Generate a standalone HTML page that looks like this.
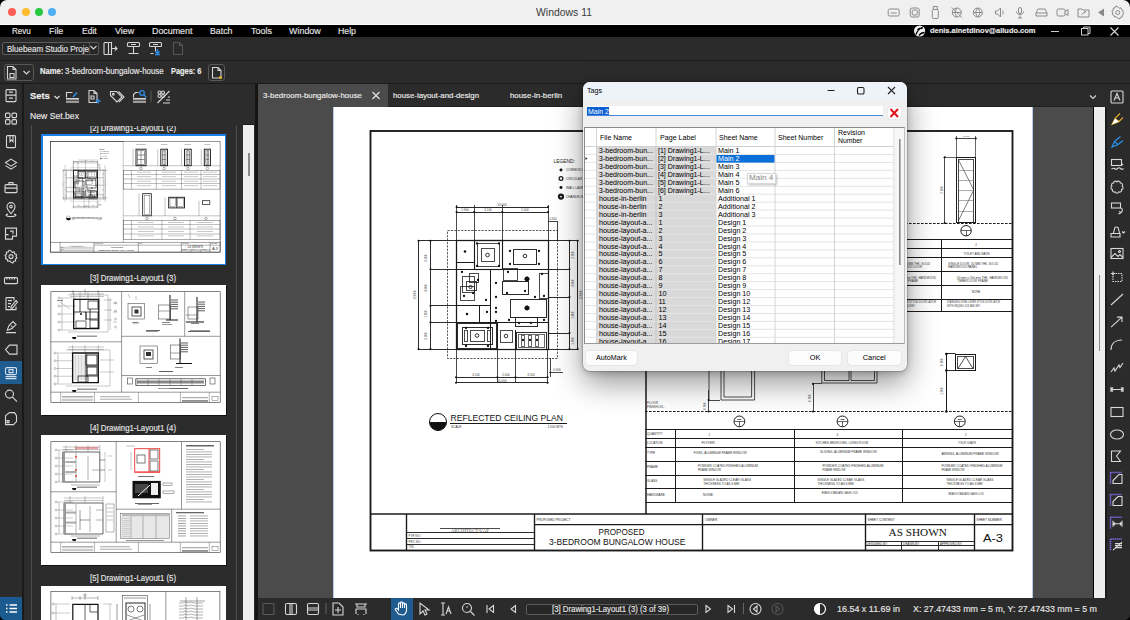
<!DOCTYPE html><html><head><meta charset="utf-8"><style>
*{margin:0;padding:0;box-sizing:border-box}
html,body{width:1130px;height:620px;overflow:hidden;background:#000;font-family:"Liberation Sans",sans-serif;-webkit-font-smoothing:antialiased}
.a{position:absolute}
.t{position:absolute;white-space:nowrap}
.w{-webkit-text-stroke:0.15px currentColor}
svg{position:absolute;overflow:visible}
</style></head><body><div class="a" style="left:0px;top:0px;width:1130px;height:25px;background:#f0f0f0;border-radius:7px 7px 0 0"></div>
<div class="a" style="left:0px;top:24px;width:1130px;height:1px;background:#fcfcfc;"></div>
<div class="a" style="left:8px;top:8.4px;width:8px;height:8px;border-radius:50%;background:#ff5f57"></div>
<div class="a" style="left:21.5px;top:8.4px;width:8px;height:8px;border-radius:50%;background:#febc2e"></div>
<div class="a" style="left:34.5px;top:8.4px;width:8px;height:8px;border-radius:50%;background:#28c840"></div>
<div class="a" style="left:47.7px;top:8.4px;width:8px;height:8px;border-radius:50%;background:#50b0f2"></div>
<div class="t" style="left:536.00px;top:7.09px;font-size:11px;line-height:11px;color:#3c3c3c;font-weight:normal;transform:scaleX(0.9476);transform-origin:0 0;">Windows 11</div>
<svg style="left:0px;top:0px;" width="1130" height="25" viewBox="0 0 1130 25"><g transform="translate(893.7,12.5)" fill="none" stroke="#8a8a8a" stroke-width="1"><rect x="-5.5" y="-3.5" width="11" height="7" rx="1.5"/><path d="M-3 0.5h6" /></g><g transform="translate(914.7,12.5)" fill="none" stroke="#8a8a8a" stroke-width="1"><rect x="-4.5" y="-4.5" width="9" height="9" rx="2"/><rect x="-2.5" y="-2.5" width="5" height="5" rx="1"/></g><g transform="translate(935.3,12.5)" fill="none" stroke="#8a8a8a" stroke-width="1"><rect x="-3" y="-3" width="6" height="9" rx="1"/><path d="M-2 -3v-3h4v3"/></g><g transform="translate(956.8,12.5)" fill="none" stroke="#8a8a8a" stroke-width="1"><circle r="4.5"/><path d="M-5 -5l10 10M-4.5 0h9M0 -4.5c-2 3-2 6 0 9"/></g><g transform="translate(977.8,12.5)" fill="none" stroke="#8a8a8a" stroke-width="1"><circle r="4.5"/><path d="M-4.5 0h9M0 -4.5c-2.5 3-2.5 6 0 9M0 -4.5c2.5 3 2.5 6 0 9"/></g><g transform="translate(999.5,12.5)" fill="none" stroke="#8a8a8a" stroke-width="1"><path d="M-4 -1.5h2l3-3v9l-3-3h-2z M3 -2c1 1 1 3 0 4"/></g><g transform="translate(1020,12.5)" fill="none" stroke="#8a8a8a" stroke-width="1"><rect x="-1.5" y="-5" width="3" height="6" rx="1.5"/><path d="M-3.5 -1c0 4 7 4 7 0M0 3v2.5M-2 5.5h4"/></g><g transform="translate(1041.5,12.5)" fill="none" stroke="#8a8a8a" stroke-width="1"><path d="M-5.5 3.5h11v-3l-2-4h-7l-2 4z M-5.5 0.5h11"/></g><g transform="translate(1062.5,12.5)" fill="none" stroke="#8a8a8a" stroke-width="1"><rect x="-5.5" y="-3.5" width="8" height="7" rx="1.5"/><path d="M2.5 -1l3-2v6l-3-2"/></g><g transform="translate(1083.5,12.5)" fill="none" stroke="#8a8a8a" stroke-width="1"><path d="M-5.5 4.5v-8h4l1 1h6v7z M-2 2l4-3M1 -1h1v1"/></g><path d="M1104,8.5 l-6,4 l6,4z" fill="#8a8a8a"/><g transform="translate(1117.8,12.5)" fill="none" stroke="#8a8a8a" stroke-width="1"><circle r="2"/><path d="M0 -5.5l1.3 1.3 1.9-.5.5 1.9 1.8.8-.5 1.9 1 1.6-1.6 1 .2 1.9-1.9.3-.8 1.8-1.8-.7L0 5.5l-1.3-1.3-1.9.5-.5-1.9-1.8-.8.5-1.9-1-1.6 1.6-1-.2-1.9 1.9-.3.8-1.8 1.8.7z"/></g></svg>
<div class="a" style="left:0px;top:25px;width:1130px;height:12px;background:#000;"></div>
<div class="t w" style="left:11.50px;top:26.81px;font-size:9.2px;line-height:9.2px;color:#e4e4e4;font-weight:normal;transform:scaleX(0.8754);transform-origin:0 0;">Revu</div>
<div class="t w" style="left:48.60px;top:26.81px;font-size:9.2px;line-height:9.2px;color:#e4e4e4;font-weight:normal;transform:scaleX(0.9647);transform-origin:0 0;">File</div>
<div class="t w" style="left:82.00px;top:26.81px;font-size:9.2px;line-height:9.2px;color:#e4e4e4;font-weight:normal;transform:scaleX(0.9273);transform-origin:0 0;">Edit</div>
<div class="t w" style="left:115.40px;top:26.81px;font-size:9.2px;line-height:9.2px;color:#e4e4e4;font-weight:normal;transform:scaleX(0.9710);transform-origin:0 0;">View</div>
<div class="t w" style="left:151.80px;top:26.81px;font-size:9.2px;line-height:9.2px;color:#e4e4e4;font-weight:normal;transform:scaleX(0.9660);transform-origin:0 0;">Document</div>
<div class="t w" style="left:209.60px;top:26.81px;font-size:9.2px;line-height:9.2px;color:#e4e4e4;font-weight:normal;transform:scaleX(0.9522);transform-origin:0 0;">Batch</div>
<div class="t w" style="left:250.70px;top:26.81px;font-size:9.2px;line-height:9.2px;color:#e4e4e4;font-weight:normal;transform:scaleX(0.9732);transform-origin:0 0;">Tools</div>
<div class="t w" style="left:289.00px;top:26.81px;font-size:9.2px;line-height:9.2px;color:#e4e4e4;font-weight:normal;transform:scaleX(0.9719);transform-origin:0 0;">Window</div>
<div class="t w" style="left:338.30px;top:26.81px;font-size:9.2px;line-height:9.2px;color:#e4e4e4;font-weight:normal;transform:scaleX(0.9514);transform-origin:0 0;">Help</div>
<div class="t w" style="left:930.00px;top:27.20px;font-size:7.8px;line-height:7.8px;color:#e8e8e8;font-weight:bold;transform:scaleX(0.9555);transform-origin:0 0;">denis.ainetdinov@alludo.com</div>
<svg style="left:0px;top:25px;" width="1130" height="12" viewBox="0 0 1130 12"><circle cx="919.6" cy="6" r="5.6" fill="#f0f0f0"/><path d="M916 9.5c1-3 3-6 7-7.5M917.5 5c1-1.5 3-2 5-1.5M919 10.5c1.5-2 3.5-3 5.5-3" stroke="#000" stroke-width="1.3" fill="none"/><path d="M1051 6.5h8" stroke="#cfcfcf" stroke-width="1"/><rect x="1081.5" y="3.5" width="6.5" height="6.5" fill="none" stroke="#cfcfcf"/><path d="M1083.5 3.5v-1.5h6.5v6.5h-2" fill="none" stroke="#cfcfcf"/><path d="M1110.5 2.5l8 8M1118.5 2.5l-8 8" stroke="#d8d8d8" stroke-width="1.1"/></svg>
<div class="a" style="left:0px;top:37px;width:1130px;height:23px;background:#2b2b2b;"></div>
<div class="a" style="left:0px;top:59.5px;width:1130px;height:1.5px;background:#1b1b1b;"></div>
<div class="a" style="left:0px;top:61px;width:1130px;height:22px;background:#2b2b2b;"></div>
<div class="a" style="left:0px;top:83px;width:1130px;height:1px;background:#1b1b1b;"></div>
<div class="a" style="left:2px;top:42px;width:97px;height:13px;border:1px solid #5c5c5c;border-radius:2px;background:#262626"></div>
<div class="a" style="left:89px;top:43px;width:1px;height:11px;background:#4a4a4a;"></div>
<div class="a" style="left:3px;top:43px;width:85.5px;height:11px;overflow:hidden">
<div class="t w" style="left:3.50px;top:1.72px;font-size:8.6px;line-height:8.6px;color:#e2e2e2;font-weight:normal;transform:scaleX(0.9322);transform-origin:0 0;">Bluebeam Studio Proje</div>
</div>
<svg style="left:0px;top:0px;" width="1130" height="60" viewBox="0 0 1130 60"><g fill="none" stroke="#d6d6d6" stroke-width="1.1"><path d="M90.5 46l3 3 3-3"/></g><g fill="none" stroke="#d6d6d6" stroke-width="1.1"><rect x="104" y="42.5" width="4.5" height="12" rx="1"/><path d="M108.5 42.5h3v12h-3M111.5 48.5h5.5M115 46.5l2 2-2 2"/></g><g fill="none" stroke="#d6d6d6" stroke-width="1.1"><rect x="127.5" y="42.5" width="12" height="4" rx="1"/><path d="M133.5 46.5v7M128.5 53.5h10M131 44.5h5"/></g><g fill="none" stroke="#d6d6d6" stroke-width="1.1"><rect x="149.5" y="42.5" width="12" height="4" rx="1"/><path d="M155.5 46.5v5M150.5 53.5h3M153 44.5h5"/></g><g fill="none" stroke="#2b8ce6" stroke-width="1.3"><path d="M157.5 49v4.5M155.5 51.5l2 2 2-2M155 54.5h5"/></g><g fill="none" stroke="#555555" stroke-width="1.1"><path d="M173.5 42.5h6l3 3v9h-9z M179.5 42.5v3h3"/></g></svg>
<div class="a" style="left:4px;top:64px;width:30px;height:17px;border:1px solid #585858;border-radius:3px"></div>
<div class="a" style="left:208px;top:64px;width:17px;height:16.5px;border:1px solid #585858;border-radius:3px"></div>
<svg style="left:0px;top:0px;" width="1130" height="84" viewBox="0 0 1130 84"><g fill="none" stroke="#d6d6d6" stroke-width="1.1"><path d="M7.5 66.5h5.5l3 3v9.5h-8.5z M13 66.5v3h3M10 73.5h4v4h-4z"/></g><g fill="none" stroke="#d6d6d6" stroke-width="1.1"><path d="M23.5 71l3 3 3-3"/></g><g fill="none" stroke="#d6d6d6" stroke-width="1.1"><path d="M212.5 67.5h5.5l3 3v7.5h-8.5z M218 67.5v3h3"/></g><circle cx="220.5" cy="77.5" r="1.5" fill="#e5b52b"/></svg>
<div class="t w" style="left:39.90px;top:68.16px;font-size:8.2px;line-height:8.2px;color:#ececec;font-weight:bold;transform:scaleX(0.9336);transform-origin:0 0;">Name:</div>
<div class="t w" style="left:65.00px;top:68.16px;font-size:8.2px;line-height:8.2px;color:#e6e6e6;font-weight:normal;transform:scaleX(0.9634);transform-origin:0 0;">3-bedroom-bungalow-house</div>
<div class="t w" style="left:170.90px;top:68.16px;font-size:8.2px;line-height:8.2px;color:#ececec;font-weight:bold;transform:scaleX(0.9043);transform-origin:0 0;">Pages: 6</div>
<div class="a" style="left:0px;top:84px;width:22px;height:536px;background:#2b2b2b;"></div>
<div class="a" style="left:22px;top:84px;width:2px;height:536px;background:#1a1a1a;"></div>
<div class="a" style="left:0px;top:361px;width:22px;height:23px;background:#1e5b8f;"></div>
<div class="a" style="left:0px;top:597px;width:22px;height:23px;background:#1a5a8f;"></div>
<svg style="left:0px;top:0px;" width="30" height="620" viewBox="0 0 30 620"><g transform="translate(11,95.6)" fill="none" stroke="#d8d8d8" stroke-width="1.1"><rect x="-5" y="-6" width="10" height="12" rx="1"/><path d="M-5 -0.5h10M-2 -3.5h4M-2 2.5h4"/></g><g transform="translate(11,118.6)" fill="none" stroke="#d8d8d8" stroke-width="1.1"><rect x="-5.5" y="-5.5" width="4.5" height="4.5" rx="1"/><rect x="1" y="-5.5" width="4.5" height="4.5" rx="1"/><rect x="-5.5" y="1" width="4.5" height="4.5" rx="1"/><rect x="1" y="1" width="4.5" height="4.5" rx="1"/></g><g transform="translate(11,141.6)" fill="none" stroke="#d8d8d8" stroke-width="1.1"><rect x="-4.5" y="-6" width="9" height="12" rx="1"/><path d="M-1 -6v6l1.5-1.5 1.5 1.5v-6"/></g><g transform="translate(11,164.6)" fill="none" stroke="#d8d8d8" stroke-width="1.1"><path d="M0 -5.5l5.5 3.5-5.5 3.5-5.5-3.5z M-5.5 1l5.5 3.5 5.5-3.5"/></g><g transform="translate(11,187.6)" fill="none" stroke="#d8d8d8" stroke-width="1.1"><rect x="-6" y="-3" width="12" height="8" rx="1"/><path d="M-2 -3v-2h4v2M-6 0.5h12"/></g><g transform="translate(11,210.6)" fill="none" stroke="#d8d8d8" stroke-width="1.1"><path d="M0 3c-3-3-4-5-4-7a4 4 0 0 1 8 0c0 2-1 4-4 7z"/><circle cy="-4" r="1.3"/><path d="M-3 3.5c-3 .5-3 2.5 3 2.5s6-2 3-2.5"/></g><g transform="translate(11,233.6)" fill="none" stroke="#d8d8d8" stroke-width="1.1"><path d="M-5.5 -5.5h11v8h-4v3h-7z M-1 -2.5h3v3M-5.5 1h3"/></g><g transform="translate(11,256.6)" fill="none" stroke="#d8d8d8" stroke-width="1.1"><circle r="2"/><path d="M0 -5.5l1.3 1.3 1.9-.5.5 1.9 1.8.8-.5 1.9 1 1.6-1.6 1 .2 1.9-1.9.3-.8 1.8-1.8-.7L0 5.5l-1.3-1.3-1.9.5-.5-1.9-1.8-.8.5-1.9-1-1.6 1.6-1-.2-1.9 1.9-.3.8-1.8 1.8.7z"/></g><g transform="translate(11,280.6)" fill="none" stroke="#d8d8d8" stroke-width="1.1"><rect x="-6.5" y="-3" width="13" height="6" rx="1"/><path d="M-4 -3v2M-1.5 -3v2M1 -3v2M3.5 -3v2"/></g><g transform="translate(11,303.6)" fill="none" stroke="#d8d8d8" stroke-width="1.1"><path d="M-5 -6h8v3M-5 -6v12h10v-3M-3 -3h4M-3 0h3M-3 3h2M0 3l5-6 1.5 1.5-5 6h-1.5z"/></g><g transform="translate(11,326.6)" fill="none" stroke="#d8d8d8" stroke-width="1.1"><path d="M-5 6h10M-4 4l2-5 4-4 3 3-4 4-5 2M0 -1l1.5 1.5"/></g><g transform="translate(11,349.6)" fill="none" stroke="#d8d8d8" stroke-width="1.1"><path d="M-5.5 0l4-4.5h7.5v9h-7.5z"/></g><g transform="translate(11,372.6)" fill="none" stroke="#cfe0f0" stroke-width="1.1"><rect x="-5.5" y="-5" width="11" height="7" rx="1.5"/><path d="M-5.5 4h11M-5.5 6h11M-2 -3h4v3h-4z"/></g><g transform="translate(11,395.6)" fill="none" stroke="#d8d8d8" stroke-width="1.1"><circle cx="-1.5" cy="-1.5" r="4"/><path d="M1.5 1.5l4.5 4.5"/></g><g transform="translate(11,418.6)" fill="none" stroke="#d8d8d8" stroke-width="1.1"><path d="M-5.5 -3l4-3h5l2 3v6l-3 3h-8z M-4 4v-2h2v2z"/></g><g transform="translate(11,608.5)" fill="none" stroke="#ffffff" stroke-width="1.1"><path d="M-1.5 -3.5h7.5M-1.5 0h7.5M-1.5 3.5h7.5" stroke-width="1.7"/><path d="M-5 -3.5h1.5M-5 0h1.5M-5 3.5h1.5" stroke-width="1.7"/></g></svg>
<div class="a" style="left:24px;top:84px;width:232px;height:536px;background:#2c2c2c;"></div>
<div class="a" style="left:255px;top:84px;width:2.5px;height:536px;background:#141414;"></div>
<div class="t w" style="left:30.00px;top:90.69px;font-size:9.7px;line-height:9.7px;color:#f0f0f0;font-weight:bold;transform:scaleX(0.9664);transform-origin:0 0;">Sets</div>
<svg style="left:0px;top:0px;" width="260" height="110" viewBox="0 0 260 110"><g fill="none" stroke="#e0e0e0" stroke-width="1.2"><path d="M54.5 96l2.5 2.5 2.5-2.5"/></g><g fill="none" stroke="#d6d6d6" stroke-width="1.1"><path d="M66.5 97.5v-5h6"/></g><rect x="66" y="98" width="13" height="1.6" fill="#d6d6d6"/><rect x="66" y="100.6" width="13" height="2.4" fill="#9a9a9a"/><g fill="none" stroke="#2b8ce6" stroke-width="1.6"><path d="M73 97l4-4.5" /></g><g fill="none" stroke="#d6d6d6" stroke-width="1.1"><path d="M89 90.5h5l3 3v9h-8z M94 90.5v3h3M91 96h3v3h-3z"/></g><g fill="none" stroke="#2b8ce6" stroke-width="1.3"><path d="M98 98.5v5M95.5 101h5"/></g><g fill="none" stroke="#d6d6d6" stroke-width="1.1"><path d="M110.5 91.5h6l5.5 5.5-5 5-6.5-6.5z"/><circle cx="113.3" cy="94.3" r="0.9"/><path d="M118.5 91.5l5.5 5.5-5 5"/></g><g fill="none" stroke="#d6d6d6" stroke-width="1.1"><path d="M133.5 97.5v-3l2-2h3"/></g><rect x="133" y="98" width="13" height="1.6" fill="#d6d6d6"/><rect x="133" y="100.6" width="13" height="2.4" fill="#9a9a9a"/><g fill="none" stroke="#2b8ce6" stroke-width="1.3"><circle cx="142" cy="93" r="2.3"/><path d="M143.8 94.8l2.5 2.5"/></g><rect x="150.5" y="91" width="1" height="11" fill="#5a5a5a"/><g fill="none" stroke="#d6d6d6" stroke-width="1.1"><circle cx="159.5" cy="92.5" r="1.5"/><circle cx="163" cy="92.5" r="1.5"/><circle cx="159.5" cy="96" r="1.5"/><circle cx="163" cy="96" r="1.5"/><path d="M157.5 103l12-12M163 103h7M166 100h4M168 97h2"/></g></svg>
<div class="t w" style="left:30.00px;top:111.95px;font-size:8.8px;line-height:8.8px;color:#e6e6e6;font-weight:normal;transform:scaleX(0.9822);transform-origin:0 0;">New Set.bex</div>
<div class="a" style="left:30.5px;top:125px;width:1px;height:495px;background:#4e4e4e;"></div>
<div class="a" style="left:243px;top:125px;width:11px;height:495px;background:#eeeeee;"></div>
<div class="a" style="left:248px;top:153px;width:1.5px;height:23px;background:#8a8a8a;"></div>
<div class="a" style="left:235.5px;top:125.5px;width:1px;height:495px;background:#505050;"></div>
<div class="a" style="left:243px;top:124px;width:11px;height:1px;background:#1a1a1a;"></div>
<div class="a" style="left:257.5px;top:84px;width:872.5px;height:23px;background:#2b2b2b;"></div>
<div class="a" style="left:257.5px;top:84px;width:130px;height:23px;background:#4b4b4b;"></div>
<div class="a" style="left:387.5px;top:106px;width:715px;height:1px;background:#1f1f1f;"></div>
<div class="t w" style="left:263.00px;top:91.63px;font-size:8px;line-height:8px;color:#ececec;font-weight:normal;transform:scaleX(0.9895);transform-origin:0 0;">3-bedroom-bungalow-house</div>
<div class="t w" style="left:393.00px;top:91.63px;font-size:8px;line-height:8px;color:#ececec;font-weight:normal;transform:scaleX(0.9767);transform-origin:0 0;">house-layout-and-design</div>
<div class="t w" style="left:510.00px;top:91.63px;font-size:8px;line-height:8px;color:#ececec;font-weight:normal;transform:scaleX(0.9827);transform-origin:0 0;">house-in-berlin</div>
<svg style="left:0px;top:0px;" width="1130" height="110" viewBox="0 0 1130 110"><path d="M372.5 92l7 7M379.5 92l-7 7" stroke="#e8e8e8" stroke-width="1.1"/><path d="M1090 95.5l3 3 3-3" stroke="#d8d8d8" stroke-width="1.1" fill="none"/></svg>
<div class="a" style="left:257.5px;top:107px;width:835.5px;height:491px;background:#4b4b4b;"></div>
<div class="a" style="left:333px;top:107px;width:700px;height:491px;background:#ffffff;"></div>
<div class="a" style="left:332.5px;top:107px;width:1px;height:491px;background:#b8cce8;"></div>
<div class="a" style="left:1032px;top:107px;width:1px;height:491px;background:#b8cce8;"></div>
<div class="a" style="left:1093.5px;top:107px;width:11.5px;height:491px;background:#eeeeee;"></div>
<div class="a" style="left:1098.6px;top:275.4px;width:1.5px;height:76px;background:#8a8a8a;"></div>
<div class="a" style="left:1105px;top:107px;width:1.5px;height:491px;background:#1b1b1b;"></div>
<div class="a" style="left:257.5px;top:107px;width:835.5px;height:491px;overflow:hidden">
<svg style="left:-257.5px;top:-107px" width="1130" height="620" viewBox="0 0 1130 620"><g id="sheet"><rect x="370.5" y="131" width="642" height="419.5" fill="none" stroke="#1a1a1a" stroke-width="1.88"/><path d="M646 131L646 514" stroke="#1a1a1a" stroke-width="1.50"/><path d="M370.5 514L1012.5 514" stroke="#1a1a1a" stroke-width="1.62"/><path d="M406.5 514L406.5 550.5" stroke="#1a1a1a" stroke-width="1.38"/><path d="M534.5 514L534.5 550.5" stroke="#1a1a1a" stroke-width="1.38"/><path d="M702.5 514L702.5 550.5" stroke="#1a1a1a" stroke-width="1.38"/><path d="M865.5 514L865.5 550.5" stroke="#1a1a1a" stroke-width="1.38"/><path d="M974.5 514L974.5 550.5" stroke="#1a1a1a" stroke-width="1.38"/><path d="M534 524.5L1012.5 524.5" stroke="#1a1a1a" stroke-width="1.25"/><path d="M406.5 532.5L534 532.5" stroke="#1a1a1a" stroke-width="1.00" stroke-opacity="0.92"/><path d="M406.5 538.5L534 538.5" stroke="#1a1a1a" stroke-width="1.00" stroke-opacity="0.92"/><path d="M406.5 544.5L534 544.5" stroke="#1a1a1a" stroke-width="1.00" stroke-opacity="0.92"/><path d="M440 528.5L500 528.5" stroke="#1a1a1a" stroke-width="1.00" stroke-opacity="0.79"/><text x="470" y="532" font-size="3.6" font-family="Liberation Serif" fill="#555" text-anchor="middle" font-weight="normal" textLength="38" lengthAdjust="spacingAndGlyphs">ARCHITECT-UAP</text><text x="408.5" y="537" font-size="3.0" font-family="Liberation Sans" fill="#444" text-anchor="start" font-weight="normal">PTR NO.:</text><text x="408.5" y="542.5" font-size="3.0" font-family="Liberation Sans" fill="#444" text-anchor="start" font-weight="normal">PRC NO.:</text><text x="408.5" y="548" font-size="3.0" font-family="Liberation Sans" fill="#444" text-anchor="start" font-weight="normal">TIN:</text><text x="536.5" y="521" font-size="3.2" font-family="Liberation Sans" fill="#222" text-anchor="start" font-weight="normal">PROPOSED PROJECT</text><text x="598.5" y="534.5" font-size="8.6" font-family="Liberation Sans" fill="#111" text-anchor="start" font-weight="normal" textLength="46" lengthAdjust="spacingAndGlyphs">PROPOSED</text><text x="549" y="545" font-size="8.6" font-family="Liberation Sans" fill="#111" text-anchor="start" font-weight="normal" textLength="136.5" lengthAdjust="spacingAndGlyphs">3-BEDROOM BUNGALOW HOUSE</text><text x="705" y="521" font-size="3.2" font-family="Liberation Sans" fill="#222" text-anchor="start" font-weight="normal">OWNER</text><text x="867.5" y="521" font-size="3.2" font-family="Liberation Sans" fill="#222" text-anchor="start" font-weight="normal">SHEET CONTENT:</text><text x="976.5" y="521" font-size="3.2" font-family="Liberation Sans" fill="#222" text-anchor="start" font-weight="normal">SHEET NUMBER</text><text x="888.5" y="536" font-size="11.2" font-family="Liberation Serif" fill="#111" text-anchor="start" font-weight="normal" textLength="58.5" lengthAdjust="spacingAndGlyphs">AS SHOWN</text><text x="983" y="542" font-size="10.5" font-family="Liberation Sans" fill="#111" text-anchor="start" font-weight="normal" textLength="20" lengthAdjust="spacingAndGlyphs">A-3</text><path d="M865.5 541.5L974.5 541.5" stroke="#1a1a1a" stroke-width="1.00" stroke-opacity="0.92"/><path d="M865.5 545.5L974.5 545.5" stroke="#1a1a1a" stroke-width="1.00" stroke-opacity="0.92"/><path d="M901.5 541.5L901.5 550.5" stroke="#1a1a1a" stroke-width="1.00" stroke-opacity="0.92"/><path d="M938.5 541.5L938.5 550.5" stroke="#1a1a1a" stroke-width="1.00" stroke-opacity="0.92"/><text x="866.5" y="544.5" font-size="3.0" font-family="Liberation Sans" fill="#333" text-anchor="start" font-weight="normal">DESIGNED BY:</text><text x="903" y="544.5" font-size="3.0" font-family="Liberation Sans" fill="#333" text-anchor="start" font-weight="normal">DRAWN BY:</text><text x="940" y="544.5" font-size="3.0" font-family="Liberation Sans" fill="#333" text-anchor="start" font-weight="normal">APPROVED BY:</text><text x="553.5" y="163.3" font-size="5.0" font-family="Liberation Sans" fill="#222" text-anchor="start" font-weight="normal" textLength="21.5" lengthAdjust="spacingAndGlyphs">LEGEND:</text><circle cx="561" cy="170" r="1.49" fill="#111"/><text x="566" y="171.3" font-size="3.2" font-family="Liberation Sans" fill="#333" text-anchor="start" font-weight="normal">COMMON LIGHT</text><circle cx="561" cy="178.5" r="1.9" fill="none" stroke="#1a1a1a" stroke-width="1.25"/><text x="566" y="179.8" font-size="3.2" font-family="Liberation Sans" fill="#333" text-anchor="start" font-weight="normal">CIRCULAR LIGHT</text><circle cx="561" cy="187.5" r="1.49" fill="#111"/><text x="566" y="188.8" font-size="3.2" font-family="Liberation Sans" fill="#333" text-anchor="start" font-weight="normal">WALL LAMP</text><circle cx="561" cy="196.5" r="2.0" fill="#fff" stroke="#1a1a1a" stroke-width="2.25"/><text x="566" y="197.8" font-size="3.2" font-family="Liberation Sans" fill="#333" text-anchor="start" font-weight="normal">CHANDELIER</text><path d="M456.6 207.5L548 207.5" stroke="#1a1a1a" stroke-width="1.00" stroke-opacity="0.92"/><text x="502" y="205.6" font-size="3.2" font-family="Liberation Sans" fill="#444" text-anchor="middle" font-weight="normal">10.000</text><path d="M456.6 212.5L548 212.5" stroke="#1a1a1a" stroke-width="1.00" stroke-opacity="0.92"/><text x="465" y="210.8" font-size="3.0" font-family="Liberation Sans" fill="#444" text-anchor="middle" font-weight="normal">1.900</text><text x="488" y="210.8" font-size="3.0" font-family="Liberation Sans" fill="#444" text-anchor="middle" font-weight="normal">3.100</text><text x="525" y="210.8" font-size="3.0" font-family="Liberation Sans" fill="#444" text-anchor="middle" font-weight="normal">5.000</text><path d="M456.5 205L456.5 240.7" stroke="#1a1a1a" stroke-width="1.00" stroke-opacity="0.79"/><circle cx="456.6" cy="212" r="1.03" fill="#111"/><path d="M474.5 205L474.5 240.7" stroke="#1a1a1a" stroke-width="1.00" stroke-opacity="0.79"/><circle cx="474" cy="212" r="1.03" fill="#111"/><path d="M502.5 205L502.5 240.7" stroke="#1a1a1a" stroke-width="1.00" stroke-opacity="0.79"/><circle cx="502.3" cy="212" r="1.03" fill="#111"/><path d="M548.5 205L548.5 240.7" stroke="#1a1a1a" stroke-width="1.00" stroke-opacity="0.79"/><circle cx="548" cy="212" r="1.03" fill="#111"/><circle cx="456.6" cy="207" r="1.03" fill="#111"/><circle cx="548" cy="207" r="1.03" fill="#111"/><path d="M548 221.5L557.3 221.5" stroke="#1a1a1a" stroke-width="1.00" stroke-opacity="0.79"/><path d="M557.5 221L557.5 240" stroke="#1a1a1a" stroke-width="1.00" stroke-opacity="0.79"/><text x="553" y="219.6" font-size="2.8" font-family="Liberation Sans" fill="#444" text-anchor="middle" font-weight="normal">0.300</text><rect x="447.5" y="230.5" width="110.0" height="128.0" fill="none" stroke="#1a1a1a" stroke-width="1.00" stroke-dasharray="2.2 1.2" stroke-opacity="0.72"/><rect x="456.5" y="240.5" width="92.0" height="109.0" fill="none" stroke="#1a1a1a" stroke-width="1.25"/><path d="M418.5 240.5L577.7 240.5" stroke="#1a1a1a" stroke-width="1.00" stroke-opacity="0.92"/><path d="M418.5 349.5L577.7 349.5" stroke="#1a1a1a" stroke-width="1.00" stroke-opacity="0.92"/><path d="M430.5 269.5L456.6 269.5" stroke="#1a1a1a" stroke-width="1.00" stroke-opacity="0.92"/><path d="M430.5 305.5L456.6 305.5" stroke="#1a1a1a" stroke-width="1.00" stroke-opacity="0.92"/><path d="M430.5 322.5L456.6 322.5" stroke="#1a1a1a" stroke-width="1.00" stroke-opacity="0.92"/><path d="M548 297.5L569.5 297.5" stroke="#1a1a1a" stroke-width="1.00" stroke-opacity="0.92"/><path d="M548 333.5L569.5 333.5" stroke="#1a1a1a" stroke-width="1.00" stroke-opacity="0.92"/><path d="M418.5 240.7L418.5 349.1" stroke="#1a1a1a" stroke-width="1.00" stroke-opacity="0.92"/><circle cx="418.5" cy="240.7" r="1.03" fill="#111"/><circle cx="418.5" cy="349.1" r="1.03" fill="#111"/><path d="M430.5 240.7L430.5 349.1" stroke="#1a1a1a" stroke-width="1.00" stroke-opacity="0.92"/><circle cx="430.5" cy="240.7" r="1.03" fill="#111"/><circle cx="430.5" cy="349.1" r="1.03" fill="#111"/><circle cx="430.5" cy="269.2" r="1.03" fill="#111"/><circle cx="430.5" cy="305.8" r="1.03" fill="#111"/><circle cx="430.5" cy="322.4" r="1.03" fill="#111"/><path d="M569.5 240.7L569.5 349.1" stroke="#1a1a1a" stroke-width="1.00" stroke-opacity="0.92"/><circle cx="569.5" cy="240.7" r="1.03" fill="#111"/><circle cx="569.5" cy="349.1" r="1.03" fill="#111"/><path d="M577.5 240.7L577.5 349.1" stroke="#1a1a1a" stroke-width="1.00" stroke-opacity="0.92"/><circle cx="577.7" cy="240.7" r="1.03" fill="#111"/><circle cx="577.7" cy="349.1" r="1.03" fill="#111"/><circle cx="569.5" cy="269.2" r="1.03" fill="#111"/><circle cx="569.5" cy="297" r="1.03" fill="#111"/><circle cx="569.5" cy="333" r="1.03" fill="#111"/><path d="M548 269.5L569.5 269.5" stroke="#1a1a1a" stroke-width="1.00" stroke-opacity="0.92"/><path d="M456.5 349.1L456.5 383" stroke="#1a1a1a" stroke-width="1.00" stroke-opacity="0.79"/><circle cx="456" cy="377.2" r="1.03" fill="#111"/><path d="M497.5 349.1L497.5 383" stroke="#1a1a1a" stroke-width="1.00" stroke-opacity="0.79"/><circle cx="497.4" cy="377.2" r="1.03" fill="#111"/><path d="M515.5 349.1L515.5 383" stroke="#1a1a1a" stroke-width="1.00" stroke-opacity="0.79"/><circle cx="515.5" cy="377.2" r="1.03" fill="#111"/><path d="M547.5 349.1L547.5 383" stroke="#1a1a1a" stroke-width="1.00" stroke-opacity="0.79"/><circle cx="547.6" cy="377.2" r="1.03" fill="#111"/><path d="M456 377.5L547.6 377.5" stroke="#1a1a1a" stroke-width="1.00" stroke-opacity="0.92"/><path d="M456 382.5L547.6 382.5" stroke="#1a1a1a" stroke-width="1.00" stroke-opacity="0.92"/><circle cx="456" cy="382.8" r="1.03" fill="#111"/><circle cx="547.6" cy="382.8" r="1.03" fill="#111"/><text x="476" y="375.8" font-size="3.0" font-family="Liberation Sans" fill="#444" text-anchor="middle" font-weight="normal">4.500</text><text x="506" y="375.8" font-size="3.0" font-family="Liberation Sans" fill="#444" text-anchor="middle" font-weight="normal">2.000</text><text x="531" y="375.8" font-size="3.0" font-family="Liberation Sans" fill="#444" text-anchor="middle" font-weight="normal">3.500</text><text x="502" y="381.6" font-size="3.0" font-family="Liberation Sans" fill="#444" text-anchor="middle" font-weight="normal">10.000</text><path d="M549 372.5L563 372.5" stroke="#1a1a1a" stroke-width="1.00" stroke-opacity="0.79"/><path d="M550.5 358L550.5 377" stroke="#1a1a1a" stroke-width="1.00" stroke-opacity="0.79"/><text x="557" y="371" font-size="3.0" font-family="Liberation Sans" fill="#444" text-anchor="middle" font-weight="normal">0.300</text><text x="427" y="258" font-size="3.0" font-family="Liberation Sans" fill="#444" text-anchor="middle" transform="rotate(-90 427 258)">3.500</text><text x="427" y="288" font-size="3.0" font-family="Liberation Sans" fill="#444" text-anchor="middle" transform="rotate(-90 427 288)">4.000</text><text x="427" y="314" font-size="3.0" font-family="Liberation Sans" fill="#444" text-anchor="middle" transform="rotate(-90 427 314)">1.600</text><text x="427" y="336" font-size="3.0" font-family="Liberation Sans" fill="#444" text-anchor="middle" transform="rotate(-90 427 336)">3.200</text><text x="416" y="295" font-size="3.0" font-family="Liberation Sans" fill="#444" text-anchor="middle" transform="rotate(-90 416 295)">12.000</text><text x="574" y="255" font-size="3.0" font-family="Liberation Sans" fill="#444" text-anchor="middle" transform="rotate(-90 574 255)">3.200</text><text x="574" y="283" font-size="3.0" font-family="Liberation Sans" fill="#444" text-anchor="middle" transform="rotate(-90 574 283)">3.000</text><text x="574" y="315" font-size="3.0" font-family="Liberation Sans" fill="#444" text-anchor="middle" transform="rotate(-90 574 315)">1.800</text><text x="574" y="341" font-size="3.0" font-family="Liberation Sans" fill="#444" text-anchor="middle" transform="rotate(-90 574 341)">1.600</text><text x="582" y="295" font-size="3.0" font-family="Liberation Sans" fill="#444" text-anchor="middle" transform="rotate(-90 582 295)">12.000</text><rect x="456.5" y="240.5" width="18.0" height="22.0" fill="none" stroke="#1a1a1a" stroke-width="1.00"/><circle cx="465" cy="251.5" r="1.26" fill="#111"/><rect x="474.5" y="240.5" width="28.0" height="29.0" fill="none" stroke="#1a1a1a" stroke-width="1.12"/><rect x="477.5" y="243.5" width="22.0" height="23.0" fill="none" stroke="#1a1a1a" stroke-width="1.00" stroke-opacity="0.79"/><rect x="481.5" y="248.5" width="13.0" height="13.0" fill="none" stroke="#1a1a1a" stroke-width="1.00" stroke-opacity="0.79"/><circle cx="487.5" cy="255" r="1.8" fill="none" stroke="#1a1a1a" stroke-width="0.88"/><circle cx="477" cy="243.5" r="1.15" fill="#111"/><circle cx="499" cy="243.5" r="1.15" fill="#111"/><circle cx="477" cy="266" r="1.15" fill="#111"/><circle cx="499" cy="266" r="1.15" fill="#111"/><rect x="502.5" y="240.5" width="46.0" height="29.0" fill="none" stroke="#1a1a1a" stroke-width="1.00"/><rect x="513.5" y="249.5" width="23.0" height="15.0" fill="none" stroke="#1a1a1a" stroke-width="1.00" stroke-opacity="0.92"/><circle cx="525" cy="256" r="1.8" fill="none" stroke="#1a1a1a" stroke-width="0.88"/><circle cx="510" cy="251" r="1.15" fill="#111"/><circle cx="539" cy="251" r="1.15" fill="#111"/><circle cx="510" cy="264" r="1.15" fill="#111"/><circle cx="539" cy="264" r="1.15" fill="#111"/><path d="M456.6 262.5L474 262.5" stroke="#1a1a1a" stroke-width="1.00"/><path d="M456.6 269.5L548 269.5" stroke="#1a1a1a" stroke-width="1.12"/><rect x="456.5" y="269.5" width="34.0" height="36.0" fill="none" stroke="#1a1a1a" stroke-width="1.00"/><rect x="462.5" y="276.5" width="12.0" height="16.0" fill="none" stroke="#1a1a1a" stroke-width="1.00" stroke-opacity="0.79"/><rect x="466.5" y="281.5" width="10.0" height="9.0" fill="none" stroke="#1a1a1a" stroke-width="1.00" stroke-opacity="0.79"/><rect x="469.5" y="273.5" width="9.0" height="9.0" fill="none" stroke="#1a1a1a" stroke-width="1.00" stroke-opacity="0.79"/><rect x="460.5" y="286.5" width="14.0" height="14.0" fill="none" stroke="#1a1a1a" stroke-width="1.00" stroke-opacity="0.79"/><circle cx="470.5" cy="287" r="1.6" fill="none" stroke="#1a1a1a" stroke-width="0.88"/><circle cx="462" cy="272" r="1.15" fill="#111"/><circle cx="478" cy="280" r="1.15" fill="#111"/><circle cx="464" cy="296" r="1.15" fill="#111"/><circle cx="473" cy="293" r="1.15" fill="#111"/><circle cx="486" cy="300" r="1.15" fill="#111"/><path d="M490.5 269.2L490.5 349.1" stroke="#1a1a1a" stroke-width="1.00"/><circle cx="496" cy="283" r="1.15" fill="#111"/><circle cx="496" cy="297" r="1.15" fill="#111"/><circle cx="496" cy="308" r="1.15" fill="#111"/><circle cx="496" cy="321" r="1.15" fill="#111"/><path d="M456.6 305.5L479 305.5" stroke="#1a1a1a" stroke-width="1.00"/><path d="M479.5 305.8L479.5 322.4" stroke="#1a1a1a" stroke-width="1.00"/><circle cx="467" cy="314" r="1.26" fill="#111"/><circle cx="487" cy="312" r="1.15" fill="#111"/><circle cx="496" cy="312" r="1.15" fill="#111"/><rect x="502.5" y="281.5" width="26.0" height="13.0" fill="none" stroke="#1a1a1a" stroke-width="1.00" stroke-opacity="0.92"/><rect x="510.5" y="299.5" width="36.0" height="18.0" fill="none" stroke="#1a1a1a" stroke-width="1.00" stroke-opacity="0.92"/><rect x="515.5" y="317.5" width="22.0" height="9.0" fill="none" stroke="#1a1a1a" stroke-width="1.00" stroke-opacity="0.92"/><rect x="503.5" y="268.5" width="14.0" height="12.0" fill="none" stroke="#1a1a1a" stroke-width="1.00" stroke-opacity="0.79"/><rect x="539.5" y="273.5" width="9.0" height="25.0" fill="none" stroke="#1a1a1a" stroke-width="1.00" stroke-opacity="0.79"/><circle cx="507" cy="293" r="1.15" fill="#111"/><circle cx="525" cy="291" r="1.15" fill="#111"/><circle cx="544" cy="296" r="1.15" fill="#111"/><circle cx="509" cy="320" r="1.15" fill="#111"/><circle cx="519" cy="323" r="1.15" fill="#111"/><circle cx="531" cy="323" r="1.15" fill="#111"/><circle cx="544" cy="320" r="1.15" fill="#111"/><circle cx="508" cy="272" r="1.15" fill="#111"/><circle cx="542" cy="274" r="1.15" fill="#111"/><circle cx="535" cy="297" r="1.15" fill="#111"/><circle cx="527" cy="279" r="2.3" fill="#111" stroke="#111" stroke-width="1" stroke-dasharray="0.8 0.6"/><circle cx="527" cy="308" r="2.3" fill="#111" stroke="#111" stroke-width="1" stroke-dasharray="0.8 0.6"/><path d="M456.6 322.5L548 322.5" stroke="#1a1a1a" stroke-width="1.12"/><rect x="457.5" y="323.5" width="39.0" height="25.0" fill="none" stroke="#1a1a1a" stroke-width="1.00" stroke-opacity="0.92"/><rect x="462.5" y="327.5" width="30.0" height="17.0" fill="none" stroke="#1a1a1a" stroke-width="1.00" stroke-opacity="0.92"/><rect x="470.5" y="330.5" width="14.0" height="11.0" fill="none" stroke="#1a1a1a" stroke-width="1.00" stroke-opacity="0.79"/><circle cx="477" cy="335.5" r="1.8" fill="none" stroke="#1a1a1a" stroke-width="0.88"/><rect x="464.5" y="330.5" width="3.0" height="11.0" fill="none" stroke="#1a1a1a" stroke-width="1.00" stroke-opacity="0.79"/><rect x="487.5" y="330.5" width="3.0" height="11.0" fill="none" stroke="#1a1a1a" stroke-width="1.00" stroke-opacity="0.79"/><circle cx="466" cy="328" r="1.15" fill="#111"/><circle cx="488" cy="328" r="1.15" fill="#111"/><circle cx="466" cy="346" r="1.15" fill="#111"/><circle cx="488" cy="346" r="1.15" fill="#111"/><rect x="500.5" y="330.5" width="12.0" height="12.0" fill="none" stroke="#1a1a1a" stroke-width="1.00" stroke-opacity="0.79"/><circle cx="506" cy="336" r="1.8" fill="none" stroke="#1a1a1a" stroke-width="0.88"/><rect x="516.5" y="332.5" width="30.0" height="17.0" fill="none" stroke="#1a1a1a" stroke-width="1.00" stroke-opacity="0.92"/><rect x="518.5" y="334.5" width="26.0" height="13.0" fill="none" stroke="#1a1a1a" stroke-width="1.00" stroke-opacity="0.66"/><rect x="521.5" y="335.5" width="3.0" height="11.0" fill="none" stroke="#1a1a1a" stroke-width="1.00" stroke-opacity="0.66"/><circle cx="523" cy="340" r="1.15" fill="#111"/><rect x="528.5" y="335.5" width="3.0" height="11.0" fill="none" stroke="#1a1a1a" stroke-width="1.00" stroke-opacity="0.66"/><circle cx="530" cy="340" r="1.15" fill="#111"/><rect x="535.5" y="335.5" width="3.0" height="11.0" fill="none" stroke="#1a1a1a" stroke-width="1.00" stroke-opacity="0.66"/><circle cx="537" cy="340" r="1.15" fill="#111"/><path d="M497.5 322.4L497.5 349.1" stroke="#1a1a1a" stroke-width="1.00"/><path d="M515.5 330L515.5 349.1" stroke="#1a1a1a" stroke-width="1.00"/><circle cx="438" cy="422" r="8.5" fill="#fff" stroke="#111" stroke-width="1"/><path d="M429.5 422a8.5 8.5 0 0 0 17 0z" fill="#111"/><path d="M429.5 422.5L446.5 422.5" stroke="#1a1a1a" stroke-width="1.00"/><text x="450.5" y="421.3" font-size="9.4" font-family="Liberation Sans" fill="#111" text-anchor="start" font-weight="normal" textLength="112.5" lengthAdjust="spacingAndGlyphs">REFLECTED CEILING PLAN</text><path d="M450 423.5L567 423.5" stroke="#1a1a1a" stroke-width="1.12"/><text x="451" y="428" font-size="3.2" font-family="Liberation Sans" fill="#333" text-anchor="start" font-weight="normal">SCALE</text><text x="563" y="428" font-size="3.2" font-family="Liberation Sans" fill="#333" text-anchor="end" font-weight="normal">1:100 MTS</text><path d="M645 223.5L1012.5 223.5" stroke="#1a1a1a" stroke-width="1.06" stroke-dasharray="2.6 1.4"/><rect x="694.5" y="157.5" width="18.0" height="65.0" fill="none" stroke="#1a1a1a" stroke-width="1.00"/><rect x="696.5" y="159.5" width="14.0" height="63.0" fill="none" stroke="#1a1a1a" stroke-width="1.00" stroke-opacity="0.79"/><path d="M694 138.5L712 138.5" stroke="#1a1a1a" stroke-width="1.00" stroke-opacity="0.79"/><circle cx="694" cy="138.5" r="1.03" fill="#111"/><circle cx="712" cy="138.5" r="1.03" fill="#111"/><path d="M694.5 136L694.5 157" stroke="#1a1a1a" stroke-width="1.00" stroke-opacity="0.66"/><path d="M712.5 136L712.5 157" stroke="#1a1a1a" stroke-width="1.00" stroke-opacity="0.66"/><text x="703.0" y="137" font-size="2.5" font-family="Liberation Sans" fill="#333" text-anchor="middle" font-weight="normal">0.900</text><path d="M682.5 157.3L682.5 223" stroke="#1a1a1a" stroke-width="1.00" stroke-opacity="0.79"/><path d="M681 157.5L694 157.5" stroke="#1a1a1a" stroke-width="1.00" stroke-opacity="0.66"/><circle cx="682.5" cy="157.3" r="1.03" fill="#111"/><circle cx="682.5" cy="223" r="1.03" fill="#111"/><text x="680.5" y="190" font-size="3.0" font-family="Liberation Sans" fill="#444" text-anchor="middle" transform="rotate(-90 680.5 190)">2.100</text><circle cx="703.0" cy="230.7" r="5.2" fill="none" stroke="#1a1a1a" stroke-width="1.00"/><path d="M698.0 230.5L708.0 230.5" stroke="#1a1a1a" stroke-width="1.00" stroke-opacity="0.66"/><path d="M703.5 230.7L703.5 235.5" stroke="#1a1a1a" stroke-width="1.00" stroke-opacity="0.66"/><rect x="773.5" y="157.5" width="18.0" height="65.0" fill="none" stroke="#1a1a1a" stroke-width="1.00"/><rect x="775.5" y="159.5" width="14.0" height="63.0" fill="none" stroke="#1a1a1a" stroke-width="1.00" stroke-opacity="0.79"/><path d="M773 138.5L791 138.5" stroke="#1a1a1a" stroke-width="1.00" stroke-opacity="0.79"/><circle cx="773" cy="138.5" r="1.03" fill="#111"/><circle cx="791" cy="138.5" r="1.03" fill="#111"/><path d="M773.5 136L773.5 157" stroke="#1a1a1a" stroke-width="1.00" stroke-opacity="0.66"/><path d="M791.5 136L791.5 157" stroke="#1a1a1a" stroke-width="1.00" stroke-opacity="0.66"/><text x="782.0" y="137" font-size="2.5" font-family="Liberation Sans" fill="#333" text-anchor="middle" font-weight="normal">0.900</text><path d="M761.5 157.3L761.5 223" stroke="#1a1a1a" stroke-width="1.00" stroke-opacity="0.79"/><path d="M760 157.5L773 157.5" stroke="#1a1a1a" stroke-width="1.00" stroke-opacity="0.66"/><circle cx="761.5" cy="157.3" r="1.03" fill="#111"/><circle cx="761.5" cy="223" r="1.03" fill="#111"/><text x="759.5" y="190" font-size="3.0" font-family="Liberation Sans" fill="#444" text-anchor="middle" transform="rotate(-90 759.5 190)">2.100</text><circle cx="782.0" cy="230.7" r="5.2" fill="none" stroke="#1a1a1a" stroke-width="1.00"/><path d="M777.0 230.5L787.0 230.5" stroke="#1a1a1a" stroke-width="1.00" stroke-opacity="0.66"/><path d="M782.5 230.7L782.5 235.5" stroke="#1a1a1a" stroke-width="1.00" stroke-opacity="0.66"/><rect x="879.5" y="157.5" width="18.0" height="65.0" fill="none" stroke="#1a1a1a" stroke-width="1.00"/><rect x="881.5" y="159.5" width="14.0" height="63.0" fill="none" stroke="#1a1a1a" stroke-width="1.00" stroke-opacity="0.79"/><path d="M879 138.5L897 138.5" stroke="#1a1a1a" stroke-width="1.00" stroke-opacity="0.79"/><circle cx="879" cy="138.5" r="1.03" fill="#111"/><circle cx="897" cy="138.5" r="1.03" fill="#111"/><path d="M879.5 136L879.5 157" stroke="#1a1a1a" stroke-width="1.00" stroke-opacity="0.66"/><path d="M897.5 136L897.5 157" stroke="#1a1a1a" stroke-width="1.00" stroke-opacity="0.66"/><text x="888.0" y="137" font-size="2.5" font-family="Liberation Sans" fill="#333" text-anchor="middle" font-weight="normal">0.900</text><path d="M867.5 157.3L867.5 223" stroke="#1a1a1a" stroke-width="1.00" stroke-opacity="0.79"/><path d="M866 157.5L879 157.5" stroke="#1a1a1a" stroke-width="1.00" stroke-opacity="0.66"/><circle cx="867.5" cy="157.3" r="1.03" fill="#111"/><circle cx="867.5" cy="223" r="1.03" fill="#111"/><text x="865.5" y="190" font-size="3.0" font-family="Liberation Sans" fill="#444" text-anchor="middle" transform="rotate(-90 865.5 190)">2.100</text><circle cx="888.0" cy="230.7" r="5.2" fill="none" stroke="#1a1a1a" stroke-width="1.00"/><path d="M883.0 230.5L893.0 230.5" stroke="#1a1a1a" stroke-width="1.00" stroke-opacity="0.66"/><path d="M888.5 230.7L888.5 235.5" stroke="#1a1a1a" stroke-width="1.00" stroke-opacity="0.66"/><rect x="956.5" y="157.5" width="19.0" height="65.0" fill="none" stroke="#1a1a1a" stroke-width="1.00"/><rect x="958.5" y="159.5" width="15.0" height="63.0" fill="none" stroke="#1a1a1a" stroke-width="1.00" stroke-opacity="0.79"/><path d="M956.3 138.5L975.8 138.5" stroke="#1a1a1a" stroke-width="1.00" stroke-opacity="0.79"/><circle cx="956.3" cy="138.5" r="1.03" fill="#111"/><circle cx="975.8" cy="138.5" r="1.03" fill="#111"/><path d="M956.5 136L956.5 157" stroke="#1a1a1a" stroke-width="1.00" stroke-opacity="0.66"/><path d="M975.5 136L975.5 157" stroke="#1a1a1a" stroke-width="1.00" stroke-opacity="0.66"/><text x="966.05" y="137" font-size="2.5" font-family="Liberation Sans" fill="#333" text-anchor="middle" font-weight="normal">0.900</text><path d="M944.5 157.3L944.5 223" stroke="#1a1a1a" stroke-width="1.00" stroke-opacity="0.79"/><path d="M943.3 157.5L956.3 157.5" stroke="#1a1a1a" stroke-width="1.00" stroke-opacity="0.66"/><circle cx="944.8" cy="157.3" r="1.03" fill="#111"/><circle cx="944.8" cy="223" r="1.03" fill="#111"/><text x="942.8" y="190" font-size="3.0" font-family="Liberation Sans" fill="#444" text-anchor="middle" transform="rotate(-90 942.8 190)">2.100</text><circle cx="966.05" cy="230.7" r="5.2" fill="none" stroke="#1a1a1a" stroke-width="1.00"/><path d="M961.05 230.5L971.05 230.5" stroke="#1a1a1a" stroke-width="1.00" stroke-opacity="0.66"/><path d="M966.5 230.7L966.5 235.5" stroke="#1a1a1a" stroke-width="1.00" stroke-opacity="0.66"/><path d="M958.3 159.5L973.8 190L958.3 221" fill="none" stroke="#222" stroke-width="0.6"/><path d="M958.3 170.5L973.8 170.5" stroke="#666" stroke-width="1.00" stroke-opacity="0.55"/><path d="M958.3 180.5L973.8 180.5" stroke="#666" stroke-width="1.00" stroke-opacity="0.55"/><path d="M958.3 190.5L973.8 190.5" stroke="#666" stroke-width="1.00" stroke-opacity="0.55"/><path d="M958.3 200.5L973.8 200.5" stroke="#666" stroke-width="1.00" stroke-opacity="0.55"/><path d="M958.3 211.5L973.8 211.5" stroke="#666" stroke-width="1.00" stroke-opacity="0.55"/><path d="M645 239.5L1012.5 239.5" stroke="#1a1a1a" stroke-width="1.00"/><path d="M645 248.5L1012.5 248.5" stroke="#1a1a1a" stroke-width="1.00"/><path d="M645 257.5L1012.5 257.5" stroke="#1a1a1a" stroke-width="1.00"/><path d="M645 271.5L1012.5 271.5" stroke="#1a1a1a" stroke-width="1.00"/><path d="M645 285.5L1012.5 285.5" stroke="#1a1a1a" stroke-width="1.00"/><path d="M645 299.5L1012.5 299.5" stroke="#1a1a1a" stroke-width="1.00"/><path d="M645 311.5L1012.5 311.5" stroke="#1a1a1a" stroke-width="1.00"/><path d="M675.5 239.6L675.5 311.6" stroke="#1a1a1a" stroke-width="1.00"/><path d="M770.5 239.6L770.5 311.6" stroke="#1a1a1a" stroke-width="1.00"/><path d="M865.5 239.6L865.5 311.6" stroke="#1a1a1a" stroke-width="1.00"/><path d="M941.5 239.6L941.5 311.6" stroke="#1a1a1a" stroke-width="1.00"/><text x="976" y="245.5" font-size="3.0" font-family="Liberation Sans" fill="#333" text-anchor="middle" font-weight="normal">2</text><text x="963.4" y="254.5" font-size="3.0" font-family="Liberation Sans" fill="#333" text-anchor="start" font-weight="normal" textLength="26" lengthAdjust="spacingAndGlyphs">TOILET AND BATH</text><text x="948" y="264.5" font-size="2.9" font-family="Liberation Sans" fill="#333" text-anchor="start" font-weight="normal" textLength="50" lengthAdjust="spacingAndGlyphs">SINGLE DOOR, 50 MM THK. SOLID</text><text x="948" y="268.3" font-size="2.9" font-family="Liberation Sans" fill="#333" text-anchor="start" font-weight="normal" textLength="29.4" lengthAdjust="spacingAndGlyphs">HARDWOOD PANEL</text><text x="957" y="278.5" font-size="2.9" font-family="Liberation Sans" fill="#333" text-anchor="start" font-weight="normal" textLength="51" lengthAdjust="spacingAndGlyphs">50 mm x 100 mm THK. HARDWOOD</text><text x="957" y="282.2" font-size="2.9" font-family="Liberation Sans" fill="#333" text-anchor="start" font-weight="normal" textLength="31" lengthAdjust="spacingAndGlyphs">TIMBER DOOR FRAME</text><text x="976" y="293" font-size="3.0" font-family="Liberation Sans" fill="#333" text-anchor="middle" font-weight="normal">NONE</text><text x="947" y="303" font-size="2.7" font-family="Liberation Sans" fill="#333" text-anchor="start" font-weight="normal" textLength="53" lengthAdjust="spacingAndGlyphs">STAINLESS STEEL LEVER STYLE DOOR LATCH</text><text x="947" y="306.8" font-size="2.7" font-family="Liberation Sans" fill="#333" text-anchor="start" font-weight="normal" textLength="33" lengthAdjust="spacingAndGlyphs">WITH UNIQUE LOCK AND KEY</text><text x="930" y="264.5" font-size="2.9" font-family="Liberation Sans" fill="#333" text-anchor="end" font-weight="normal">50 MM THK. SOLID</text><text x="922" y="268.3" font-size="2.9" font-family="Liberation Sans" fill="#333" text-anchor="end" font-weight="normal">WOOD DOOR</text><text x="936" y="278.5" font-size="2.9" font-family="Liberation Sans" fill="#333" text-anchor="end" font-weight="normal">mm THK. HARDWOOD</text><text x="918" y="282.2" font-size="2.9" font-family="Liberation Sans" fill="#333" text-anchor="end" font-weight="normal">R FRAME</text><text x="936" y="303" font-size="2.7" font-family="Liberation Sans" fill="#333" text-anchor="end" font-weight="normal">LEVER STYLE DOOR LATCH</text><text x="915" y="306.8" font-size="2.7" font-family="Liberation Sans" fill="#333" text-anchor="end" font-weight="normal">ND KEY</text><path d="M708.6 400.5L720 400.5" stroke="#1a1a1a" stroke-width="1.00" stroke-opacity="0.79"/><path d="M708.5 390L708.5 411.5" stroke="#1a1a1a" stroke-width="1.00" stroke-opacity="0.79"/><circle cx="708.6" cy="400" r="1.03" fill="#111"/><circle cx="708.6" cy="411.5" r="1.03" fill="#111"/><path d="M709 330V400M721 330V400H754.6V330M724 330V397H751.6V330" fill="none" stroke="#222" stroke-width="0.8"/><text x="706" y="406" font-size="3.0" font-family="Liberation Sans" fill="#444" text-anchor="middle" transform="rotate(-90 706 406)">0.900</text><path d="M813.5 383.9L813.5 411.5" stroke="#1a1a1a" stroke-width="1.00" stroke-opacity="0.79"/><path d="M813 383.5L821.8 383.5" stroke="#1a1a1a" stroke-width="1.00" stroke-opacity="0.79"/><circle cx="813" cy="383.9" r="1.03" fill="#111"/><circle cx="813" cy="411.5" r="1.03" fill="#111"/><path d="M821.8 340V383H877V340M824.5 340V380.5H849V340M851 340V380.5H874.5V340" fill="none" stroke="#222" stroke-width="0.8"/><text x="810.5" y="398" font-size="3.0" font-family="Liberation Sans" fill="#444" text-anchor="middle" transform="rotate(-90 810.5 398)">0.900</text><path d="M946.5 353.9L946.5 411.5" stroke="#1a1a1a" stroke-width="1.00"/><path d="M946.3 353.5L955.5 353.5" stroke="#1a1a1a" stroke-width="1.00" stroke-opacity="0.92"/><path d="M946.3 370.5L955.5 370.5" stroke="#1a1a1a" stroke-width="1.00" stroke-opacity="0.92"/><circle cx="946.3" cy="353.9" r="1.26" fill="#111"/><circle cx="946.3" cy="370.6" r="1.26" fill="#111"/><circle cx="946.3" cy="411.5" r="1.26" fill="#111"/><rect x="955.5" y="354.5" width="20.0" height="16.0" fill="none" stroke="#1a1a1a" stroke-width="1.00"/><rect x="957.5" y="356.5" width="16.0" height="12.0" fill="none" stroke="#1a1a1a" stroke-width="1.00" stroke-opacity="0.79"/><path d="M958 368.5L965.5 356.5L973 368.5" fill="none" stroke="#222" stroke-width="0.8"/><text x="943" y="362" font-size="3.0" font-family="Liberation Sans" fill="#444" text-anchor="middle" transform="rotate(-90 943 362)">0.600</text><text x="943" y="391" font-size="3.0" font-family="Liberation Sans" fill="#444" text-anchor="middle" transform="rotate(-90 943 391)">1.500</text><text x="647" y="403.5" font-size="3.2" font-family="Liberation Sans" fill="#333" text-anchor="start" font-weight="normal">FLOOR</text><text x="647" y="407.5" font-size="3.2" font-family="Liberation Sans" fill="#333" text-anchor="start" font-weight="normal">FINISH LVL.</text><path d="M645 411.5L1012.5 411.5" stroke="#1a1a1a" stroke-width="1.06" stroke-dasharray="2.6 1.4"/><circle cx="739.4" cy="421.4" r="5.4" fill="none" stroke="#1a1a1a" stroke-width="1.00"/><path d="M734.4 421.5L744.4 421.5" stroke="#1a1a1a" stroke-width="1.00" stroke-opacity="0.66"/><path d="M739.5 421.4L739.5 426.5" stroke="#1a1a1a" stroke-width="1.00" stroke-opacity="0.66"/><path d="M737.4 419.5L741.4 419.5" stroke="#1a1a1a" stroke-width="1.00" stroke-opacity="0.66"/><circle cx="842.5" cy="421.4" r="5.4" fill="none" stroke="#1a1a1a" stroke-width="1.00"/><path d="M837.5 421.5L847.5 421.5" stroke="#1a1a1a" stroke-width="1.00" stroke-opacity="0.66"/><path d="M842.5 421.4L842.5 426.5" stroke="#1a1a1a" stroke-width="1.00" stroke-opacity="0.66"/><path d="M840.5 419.5L844.5 419.5" stroke="#1a1a1a" stroke-width="1.00" stroke-opacity="0.66"/><circle cx="959.8" cy="421.4" r="5.4" fill="none" stroke="#1a1a1a" stroke-width="1.00"/><path d="M954.8 421.5L964.8 421.5" stroke="#1a1a1a" stroke-width="1.00" stroke-opacity="0.66"/><path d="M959.5 421.4L959.5 426.5" stroke="#1a1a1a" stroke-width="1.00" stroke-opacity="0.66"/><path d="M957.8 419.5L961.8 419.5" stroke="#1a1a1a" stroke-width="1.00" stroke-opacity="0.66"/><path d="M645 429.5L1012.5 429.5" stroke="#1a1a1a" stroke-width="1.00"/><path d="M645 438.5L1012.5 438.5" stroke="#1a1a1a" stroke-width="1.00"/><path d="M645 447.5L1012.5 447.5" stroke="#1a1a1a" stroke-width="1.00"/><path d="M645 461.5L1012.5 461.5" stroke="#1a1a1a" stroke-width="1.00"/><path d="M645 475.5L1012.5 475.5" stroke="#1a1a1a" stroke-width="1.00"/><path d="M645 488.5L1012.5 488.5" stroke="#1a1a1a" stroke-width="1.00"/><path d="M645 502.5L1012.5 502.5" stroke="#1a1a1a" stroke-width="1.00"/><path d="M675.5 429.2L675.5 502.8" stroke="#1a1a1a" stroke-width="1.00"/><path d="M794.5 429.2L794.5 502.8" stroke="#1a1a1a" stroke-width="1.00"/><path d="M902.5 429.2L902.5 502.8" stroke="#1a1a1a" stroke-width="1.00"/><text x="647" y="434.5" font-size="3.1" font-family="Liberation Sans" fill="#333" text-anchor="start" font-weight="normal">QUANTITY</text><text x="647" y="443.5" font-size="3.1" font-family="Liberation Sans" fill="#333" text-anchor="start" font-weight="normal">LOCATION</text><text x="647" y="454" font-size="3.1" font-family="Liberation Sans" fill="#333" text-anchor="start" font-weight="normal">TYPE</text><text x="647" y="468" font-size="3.1" font-family="Liberation Sans" fill="#333" text-anchor="start" font-weight="normal">FRAME</text><text x="647" y="482" font-size="3.1" font-family="Liberation Sans" fill="#333" text-anchor="start" font-weight="normal">GLASS</text><text x="647" y="495.5" font-size="3.1" font-family="Liberation Sans" fill="#333" text-anchor="start" font-weight="normal">HARDWARE</text><text x="708.5" y="435.6" font-size="2.9" font-family="Liberation Sans" fill="#333" text-anchor="start" font-weight="normal">1</text><text x="701.4" y="443.6" font-size="2.9" font-family="Liberation Sans" fill="#333" text-anchor="start" font-weight="normal" textLength="13.5" lengthAdjust="spacingAndGlyphs">FOYER</text><text x="693.6" y="453.6" font-size="2.9" font-family="Liberation Sans" fill="#333" text-anchor="start" font-weight="normal" textLength="53" lengthAdjust="spacingAndGlyphs">FIXED, ALUMINUM FRAME WINDOW</text><text x="697.9" y="466.7" font-size="2.9" font-family="Liberation Sans" fill="#333" text-anchor="start" font-weight="normal" textLength="60" lengthAdjust="spacingAndGlyphs">POWDER COATED FINISHED ALUMINUM</text><text x="697.9" y="470.8" font-size="2.9" font-family="Liberation Sans" fill="#333" text-anchor="start" font-weight="normal" textLength="23" lengthAdjust="spacingAndGlyphs">FRAME WINDOW</text><text x="703.2" y="480.9" font-size="2.9" font-family="Liberation Sans" fill="#333" text-anchor="start" font-weight="normal" textLength="47.8" lengthAdjust="spacingAndGlyphs">SINGLE GLAZED CLEAR GLASS</text><text x="703.2" y="485" font-size="2.9" font-family="Liberation Sans" fill="#333" text-anchor="start" font-weight="normal" textLength="36" lengthAdjust="spacingAndGlyphs">THICKNESS TO AS 6 MM</text><text x="703" y="495.8" font-size="2.9" font-family="Liberation Sans" fill="#333" text-anchor="start" font-weight="normal" textLength="10" lengthAdjust="spacingAndGlyphs">NONE</text><text x="836.6" y="435.6" font-size="2.9" font-family="Liberation Sans" fill="#333" text-anchor="start" font-weight="normal">4</text><text x="815.8" y="444" font-size="2.9" font-family="Liberation Sans" fill="#333" text-anchor="start" font-weight="normal" textLength="52" lengthAdjust="spacingAndGlyphs">KITCHEN, BEDROOMS, LIVING ROOM</text><text x="820" y="453.3" font-size="2.9" font-family="Liberation Sans" fill="#333" text-anchor="start" font-weight="normal" textLength="56.6" lengthAdjust="spacingAndGlyphs">SLIDING, ALUMINUM FRAME WINDOW</text><text x="822.5" y="466.7" font-size="2.9" font-family="Liberation Sans" fill="#333" text-anchor="start" font-weight="normal" textLength="61" lengthAdjust="spacingAndGlyphs">POWDER COATED FINISHED ALUMINUM</text><text x="822.5" y="470.8" font-size="2.9" font-family="Liberation Sans" fill="#333" text-anchor="start" font-weight="normal" textLength="23" lengthAdjust="spacingAndGlyphs">FRAME WINDOW</text><text x="817.5" y="480.9" font-size="2.9" font-family="Liberation Sans" fill="#333" text-anchor="start" font-weight="normal" textLength="46.7" lengthAdjust="spacingAndGlyphs">SINGLE GLAZED CLEAR GLASS</text><text x="817.5" y="485" font-size="2.9" font-family="Liberation Sans" fill="#333" text-anchor="start" font-weight="normal" textLength="36" lengthAdjust="spacingAndGlyphs">THICKNESS TO AS 6 MM</text><text x="821.8" y="494" font-size="2.9" font-family="Liberation Sans" fill="#333" text-anchor="start" font-weight="normal" textLength="36" lengthAdjust="spacingAndGlyphs">BRASS STANDARD SASH LOCK</text><text x="965" y="436" font-size="2.9" font-family="Liberation Sans" fill="#333" text-anchor="start" font-weight="normal">2</text><text x="958" y="444.3" font-size="2.9" font-family="Liberation Sans" fill="#333" text-anchor="start" font-weight="normal" textLength="17.8" lengthAdjust="spacingAndGlyphs">TOILET &amp; BATH</text><text x="941.4" y="454.5" font-size="2.9" font-family="Liberation Sans" fill="#333" text-anchor="start" font-weight="normal" textLength="57.4" lengthAdjust="spacingAndGlyphs">AWNING, ALUMINUM FRAME WINDOW</text><text x="941.4" y="466.7" font-size="2.9" font-family="Liberation Sans" fill="#333" text-anchor="start" font-weight="normal" textLength="61" lengthAdjust="spacingAndGlyphs">POWDER COATED FINISHED ALUMINUM</text><text x="941.4" y="470.8" font-size="2.9" font-family="Liberation Sans" fill="#333" text-anchor="start" font-weight="normal" textLength="23" lengthAdjust="spacingAndGlyphs">FRAME WINDOW</text><text x="946.4" y="481" font-size="2.9" font-family="Liberation Sans" fill="#333" text-anchor="start" font-weight="normal" textLength="47" lengthAdjust="spacingAndGlyphs">SINGLE GLAZED CLEAR GLASS</text><text x="946.4" y="485.1" font-size="2.9" font-family="Liberation Sans" fill="#333" text-anchor="start" font-weight="normal" textLength="36" lengthAdjust="spacingAndGlyphs">THICKNESS TO AS 6 MM</text><text x="948.5" y="494.5" font-size="2.9" font-family="Liberation Sans" fill="#333" text-anchor="start" font-weight="normal" textLength="35.4" lengthAdjust="spacingAndGlyphs">BRASS STANDARD SASH LOCK</text></g></svg>
</div>
<div class="a" style="left:1106.5px;top:84px;width:23.5px;height:514px;background:#2b2b2b;"></div>
<svg style="left:0px;top:0px;" width="1130" height="620" viewBox="0 0 1130 620"><g transform="translate(1117,97)" fill="none" stroke="#d8d8d8" stroke-width="1.1"><rect x="-6" y="-6" width="12" height="12" rx="1"/><path d="M-3 3.5l3-7 3 7M-2 1h4"/></g><g transform="translate(1117,119.5)" fill="none" stroke="#e0a92c" stroke-width="1.1"><path d="M-5 5l3-6 4 3z M-2 -1l5-5M2 2l4-4"/></g><path d="M1112 124.5l3-6 4 3z" fill="#fff"/><g transform="translate(1117,142)" fill="none" stroke="#2a8de8" stroke-width="1.3"><path d="M-5 5l2.5-5.5 3.5 3z M-2.5 -0.5l6-5M1 2.5l5-4"/></g><g transform="translate(1117,164.5)" fill="none" stroke="#d8d8d8" stroke-width="1.1"><rect x="-5.5" y="-5" width="10" height="6"/><path d="M-5.5 4c1 1 2 -1 3 0s2 1 3 0 2-1 3 0 2 1 3 0M4.5 -1l1.5 1.5"/></g><g transform="translate(1117,187)" fill="none" stroke="#d8d8d8" stroke-width="1.1"><path d="M0.00 -5.20A1.9 1.9 0 0 1 3.34 -3.98A1.9 1.9 0 0 1 5.12 -0.90A1.9 1.9 0 0 1 4.50 2.60A1.9 1.9 0 0 1 1.78 4.89A1.9 1.9 0 0 1 -1.78 4.89A1.9 1.9 0 0 1 -4.50 2.60A1.9 1.9 0 0 1 -5.12 -0.90A1.9 1.9 0 0 1 -3.34 -3.98A1.9 1.9 0 0 1 -0.00 -5.20Z"/></g><g transform="translate(1117,208.5)" fill="none" stroke="#d8d8d8" stroke-width="1.1"><rect x="-5.5" y="-5.5" width="9" height="5"/><path d="M3.5 -0.5c2 0 3 3 0 5M1.5 5.5l2-1-1-2"/></g><g transform="translate(1117,231.5)" fill="none" stroke="#d8d8d8" stroke-width="1.1"><path d="M-6 2h9v3.5h-9z M-3.5 2c0-2 1-3 1-4.5a2 2 0 1 1 4 0c0 1.5 1 2.5 1 4.5"/><path d="M5 0l1.5 1.5 1.5-1.5"/></g><g transform="translate(1117,253.5)" fill="none" stroke="#d8d8d8" stroke-width="1.1"><rect x="-6" y="-5" width="12" height="10"/><path d="M-6 4l4-4 3 3 2-2 3 3"/><circle cx="2.5" cy="-2" r="1"/></g><g transform="translate(1117,276.5)" fill="none" stroke="#d8d8d8" stroke-width="1.1"><rect x="-4" y="-3" width="9" height="8" stroke-dasharray="1.5 1"/><path d="M-6 -3h4M-4 -5v4"/></g><g transform="translate(1117,299.5)" fill="none" stroke="#d8d8d8" stroke-width="1.1"><path d="M-6 5.5l12-11"/></g><g transform="translate(1117,321.6)" fill="none" stroke="#d8d8d8" stroke-width="1.1"><path d="M-6 5.5l11-10M0 -4.5h5v5"/></g><g transform="translate(1117,344.5)" fill="none" stroke="#d8d8d8" stroke-width="1.1"><path d="M-6 5.5c0-6 4-10 11-10"/></g><g transform="translate(1117,367)" fill="none" stroke="#d8d8d8" stroke-width="1.1"><path d="M-6 5l3-4 1 3 4-6 1 2.5 3-4.5"/></g><g transform="translate(1117,389.5)" fill="none" stroke="#d8d8d8" stroke-width="1.1"><path d="M-6 0h12M-6 -2.5v5M6 -2.5v5M-4 -2l-2 2 2 2M4 -2l2 2-2 2"/></g><g transform="translate(1117,412)" fill="none" stroke="#d8d8d8" stroke-width="1.1"><rect x="-6" y="-4.5" width="12" height="9"/></g><g transform="translate(1117,434.5)" fill="none" stroke="#d8d8d8" stroke-width="1.1"><ellipse rx="6.5" ry="4.5"/></g><g transform="translate(1117,456.5)" fill="none" stroke="#d8d8d8" stroke-width="1.1"><path d="M-5.5 -5.5h9l-4 5 4 5.5h-9z"/></g><g transform="translate(1117,479)" fill="none" stroke="#9270ff" stroke-width="1.5"><path d="M-6.5 -6.5h12M-6.5 -6.5v12" stroke-dasharray="1.2 0.8"/></g><g transform="translate(1117,501)" fill="none" stroke="#9270ff" stroke-width="1.5"><path d="M-6.5 -6.5h12M-6.5 -6.5v12" stroke-dasharray="1.2 0.8"/></g><g transform="translate(1117,523.8)" fill="none" stroke="#9270ff" stroke-width="1.5"><path d="M-6.5 -6.5h12M-6.5 -6.5v12" stroke-dasharray="1.2 0.8"/></g><g transform="translate(1117,545.6)" fill="none" stroke="#9270ff" stroke-width="1.5"><path d="M-6.5 -6.5h12M-6.5 -6.5v12" stroke-dasharray="1.2 0.8"/></g><g transform="translate(1117,479)" fill="none" stroke="#d8d8d8" stroke-width="1.1"><path d="M-4 4.5h9v-9h-3l-6 6z"/></g><g transform="translate(1117,501)" fill="none" stroke="#d8d8d8" stroke-width="1.1"><path d="M-4 4.5h9v-9h-4l-5 5z"/></g><g transform="translate(1117,523.8)" fill="none" stroke="#d8d8d8" stroke-width="1.1"><path d="M-4 0h9M-4 -3v6M5 -3v6M-2 -1.5l-1.5 1.5 1.5 1.5M3 -1.5l1.5 1.5-1.5 1.5"/></g><g transform="translate(1117,545.6)" fill="none" stroke="#d8d8d8" stroke-width="1.1"><path d="M-4 4.5l9-8M-2 -2h7M-2 0h7M-2 2h7"/></g></svg>
<div class="a" style="left:257.5px;top:598px;width:872.5px;height:22px;background:#2b2b2b;"></div>
<div class="a" style="left:390.5px;top:598px;width:22px;height:22px;background:#1f5b8f;"></div>
<svg style="left:0px;top:0px;" width="1130" height="620" viewBox="0 0 1130 620"><g transform="translate(268.5,609)" fill="none" stroke="#5a5a5a" stroke-width="1.1"><rect x="-5.5" y="-5.5" width="11" height="11" rx="1"/></g><g transform="translate(291,609)" fill="none" stroke="#d8d8d8" stroke-width="1.1"><rect x="-5.5" y="-5.5" width="11" height="11" rx="1.5"/><path d="M-1 -5.5v11M1 -5.5v11"/></g><g transform="translate(313,609)" fill="none" stroke="#d8d8d8" stroke-width="1.1"><rect x="-5.5" y="-5.5" width="11" height="11" rx="1.5"/><path d="M-5.5 -1h11M-5.5 1h11"/></g><rect x="325.5" y="603" width="1" height="11" fill="#666"/><g transform="translate(338,609)" fill="none" stroke="#d8d8d8" stroke-width="1.1"><path d="M-5 -6h6l4 4v8h-10z M-3 1h6M0 -2v6"/></g><g transform="translate(361,609)" fill="none" stroke="#d8d8d8" stroke-width="1.1"><path d="M-6 -5h12M-4 -5v3h8v-3M-5 5v-5h10v5M-3 5v1M3 5v1"/></g><g transform="translate(401.5,609)" fill="none" stroke="#ffffff" stroke-width="1.1"><path d="M-3 5l-3-4c-1-1.5 1-2.5 2-1l1 1v-6c0-1.5 2-1.5 2 0v4-5c0-1.5 2-1.5 2 0v5-4c0-1.5 2-1.5 2 0v4-3c0-1.5 2-1.5 2 0v5c0 3-2 5-4 5z"/></g><g transform="translate(424,609)" fill="none" stroke="#d8d8d8" stroke-width="1.1"><path d="M-4 -6v11l3-3 2 4 2-1-2-4h4z"/></g><g transform="translate(446,609)" fill="none" stroke="#d8d8d8" stroke-width="1.1"><path d="M-5 -6h4M-5 6h4M-3 -6v12M0 5l2.5-7 2.5 7M1 2h3"/></g><g transform="translate(468,609)" fill="none" stroke="#d8d8d8" stroke-width="1.1"><circle cx="-1" cy="-1" r="4.5"/><path d="M2.5 2.5l4 4M-1 -2.8v1.5"/></g><g transform="translate(490.5,609)" fill="none" stroke="#d8d8d8" stroke-width="1.1"><path d="M-3.5 -4v8M3 -3.5l-4.5 3.5 4.5 3.5z"/></g><g transform="translate(513.5,609)" fill="none" stroke="#d8d8d8" stroke-width="1.1"><path d="M2 -3.5l-4.5 3.5 4.5 3.5z"/></g><g transform="translate(708,609)" fill="none" stroke="#d8d8d8" stroke-width="1.1"><path d="M-2 -3.5l4.5 3.5-4.5 3.5z"/></g><g transform="translate(731,609)" fill="none" stroke="#d8d8d8" stroke-width="1.1"><path d="M-3 -3.5l4.5 3.5-4.5 3.5z M3.5 -4v8"/></g><rect x="743" y="603" width="1" height="11" fill="#666"/><g transform="translate(755.5,609)" fill="none" stroke="#d8d8d8" stroke-width="1.1"><circle r="5.5"/><path d="M1.5 -3l-3.5 3 3.5 3z"/></g><g transform="translate(777.5,609)" fill="none" stroke="#555555" stroke-width="1.1"><circle r="5.5"/><path d="M-1.5 -3l3.5 3-3.5 3z"/></g><circle cx="820" cy="609" r="5.5" fill="none" stroke="#fff" stroke-width="1.2"/><path d="M820 603.5a5.5 5.5 0 0 0 0 11z" fill="#fff"/></svg>
<div class="a" style="left:525.5px;top:603.5px;width:172px;height:11px;border:1px solid #5a5a5a;border-radius:2px;background:#262626"></div>
<div class="t w" style="left:552.40px;top:604.70px;font-size:8.5px;line-height:8.5px;color:#e6e6e6;font-weight:normal;transform:scaleX(0.9173);transform-origin:0 0;">[3] Drawing1-Layout1 (3) (3 of 39)</div>
<div class="t w" style="left:837.30px;top:604.55px;font-size:8.8px;line-height:8.8px;color:#e6e6e6;font-weight:normal;transform:scaleX(1.0166);transform-origin:0 0;">16.54 x 11.69 in</div>
<div class="t w" style="left:913.00px;top:604.55px;font-size:8.8px;line-height:8.8px;color:#e6e6e6;font-weight:normal;transform:scaleX(1.0067);transform-origin:0 0;">X: 27.47433 mm = 5 m, Y: 27.47433 mm = 5 m</div>
<div class="a" style="left:41px;top:134.3px;width:185px;height:131.2px;background:#1b7fe8;"></div>
<div class="a" style="left:42.5px;top:135.8px;width:182px;height:128.2px;background:#ffffff;"></div>
<div class="a" style="left:43px;top:136px;width:181px;height:127.5px;overflow:hidden">
<svg style="left:-43px;top:-136px" width="1130" height="620" viewBox="0 0 1130 620"><defs><clipPath id="c1"><rect x="40" y="130" width="83.5" height="111.5"/><rect x="40" y="241.5" width="190" height="30"/></clipPath></defs><g clip-path="url(#c1)"><g transform="translate(50.6 141.3) scale(0.264) translate(-370.5 -131)"><use href="#sheet"/></g></g><rect x="50.6" y="141.3" width="169.5" height="110.9" fill="none" stroke="#333" stroke-width="0.5"/><rect x="73.4" y="170.2" width="24.2" height="27.5" stroke="#111" stroke-width="0.9" fill="none"/><rect x="78" y="171.5" width="7.5" height="7" stroke="#222" stroke-width="0.6" fill="none"/><rect x="87" y="171.5" width="9.5" height="7" stroke="#222" stroke-width="0.6" fill="none"/><rect x="75" y="181" width="9" height="8" stroke="#222" stroke-width="0.6" fill="none"/><rect x="86" y="180" width="10" height="8" stroke="#222" stroke-width="0.6" fill="none"/><rect x="75" y="191" width="9" height="5.5" stroke="#222" stroke-width="0.6" fill="none"/><rect x="85.5" y="190" width="5" height="6.5" stroke="#222" stroke-width="0.5" fill="none"/><rect x="91" y="191" width="5.5" height="5.5" stroke="#222" stroke-width="0.6" fill="none"/><path d="M62 170.2H108M62 197.7H108M65 165V202M105 165V202M73.4 163V170M97.6 163V170M78 160H98" stroke="#666" stroke-width="0.3" fill="none"/><path d="M123.5 165.7H220" stroke="#555" stroke-width="0.35" fill="none"/><rect x="136" y="149.2" width="10" height="16.5" stroke="#111" stroke-width="0.9" fill="none"/><rect x="137.6" y="150.8" width="6.8" height="13.5" stroke="#333" stroke-width="0.5" fill="none"/><path d="M137.6 155H144.4M137.6 159.5H144.4M141.0 150.8V164.3" stroke="#333" stroke-width="0.5" fill="none"/><path d="M136 144.5H146M133 149.2V165.7" stroke="#555" stroke-width="0.35" fill="none"/><circle cx="141.0" cy="168.4" r="1.3" fill="none" stroke="#333" stroke-width="0.4"/><rect x="160.8" y="149.2" width="6.699999999999989" height="16.5" stroke="#111" stroke-width="0.9" fill="none"/><rect x="162.4" y="150.8" width="3.4999999999999885" height="13.5" stroke="#333" stroke-width="0.5" fill="none"/><path d="M162.4 155H165.9M162.4 159.5H165.9M164.15 150.8V164.3" stroke="#333" stroke-width="0.5" fill="none"/><path d="M160.8 144.5H167.5M157.8 149.2V165.7" stroke="#555" stroke-width="0.35" fill="none"/><circle cx="164.15" cy="168.4" r="1.3" fill="none" stroke="#333" stroke-width="0.4"/><rect x="184.5" y="149.2" width="6.699999999999989" height="16.5" stroke="#111" stroke-width="0.9" fill="none"/><rect x="186.1" y="150.8" width="3.4999999999999885" height="13.5" stroke="#333" stroke-width="0.5" fill="none"/><path d="M186.1 155H189.6M186.1 159.5H189.6M187.85 150.8V164.3" stroke="#333" stroke-width="0.5" fill="none"/><path d="M184.5 144.5H191.2M181.5 149.2V165.7" stroke="#555" stroke-width="0.35" fill="none"/><circle cx="187.85" cy="168.4" r="1.3" fill="none" stroke="#333" stroke-width="0.4"/><rect x="204.3" y="149.2" width="6.099999999999994" height="16.5" stroke="#111" stroke-width="0.9" fill="none"/><rect x="205.9" y="150.8" width="2.899999999999994" height="13.5" stroke="#333" stroke-width="0.5" fill="none"/><path d="M205.9 155H208.8M205.9 159.5H208.8M207.35000000000002 150.8V164.3" stroke="#333" stroke-width="0.5" fill="none"/><path d="M204.3 144.5H210.4M201.3 149.2V165.7" stroke="#555" stroke-width="0.35" fill="none"/><circle cx="207.35000000000002" cy="168.4" r="1.3" fill="none" stroke="#333" stroke-width="0.4"/><rect x="123.5" y="170.2" width="96.5" height="18.9" stroke="#333" stroke-width="0.4" fill="none"/><path d="M123.5 174.5H220" stroke="#444" stroke-width="0.35" fill="none"/><path d="M123.5 179H220" stroke="#444" stroke-width="0.35" fill="none"/><path d="M123.5 183.5H220" stroke="#444" stroke-width="0.35" fill="none"/><path d="M131.4 170.2V189.1" stroke="#444" stroke-width="0.35" fill="none"/><path d="M156.3 170.2V189.1" stroke="#444" stroke-width="0.35" fill="none"/><path d="M181.5 170.2V189.1" stroke="#444" stroke-width="0.35" fill="none"/><path d="M201 170.2V189.1" stroke="#444" stroke-width="0.35" fill="none"/><rect x="137" y="171.8" width="14" height="0.8" stroke="none" stroke-width="0" fill="#bbb"/><rect x="162" y="171.8" width="14" height="0.8" stroke="none" stroke-width="0" fill="#bbb"/><rect x="184" y="171.8" width="14" height="0.8" stroke="none" stroke-width="0" fill="#bbb"/><rect x="203" y="171.8" width="14" height="0.8" stroke="none" stroke-width="0" fill="#bbb"/><rect x="137" y="176.3" width="14" height="0.8" stroke="none" stroke-width="0" fill="#bbb"/><rect x="162" y="176.3" width="14" height="0.8" stroke="none" stroke-width="0" fill="#bbb"/><rect x="184" y="176.3" width="14" height="0.8" stroke="none" stroke-width="0" fill="#bbb"/><rect x="203" y="176.3" width="14" height="0.8" stroke="none" stroke-width="0" fill="#bbb"/><rect x="137" y="180.8" width="14" height="0.8" stroke="none" stroke-width="0" fill="#bbb"/><rect x="162" y="180.8" width="14" height="0.8" stroke="none" stroke-width="0" fill="#bbb"/><rect x="184" y="180.8" width="14" height="0.8" stroke="none" stroke-width="0" fill="#bbb"/><rect x="203" y="180.8" width="14" height="0.8" stroke="none" stroke-width="0" fill="#bbb"/><rect x="137" y="185.3" width="14" height="0.8" stroke="none" stroke-width="0" fill="#bbb"/><rect x="162" y="185.3" width="14" height="0.8" stroke="none" stroke-width="0" fill="#bbb"/><rect x="184" y="185.3" width="14" height="0.8" stroke="none" stroke-width="0" fill="#bbb"/><rect x="203" y="185.3" width="14" height="0.8" stroke="none" stroke-width="0" fill="#bbb"/><rect x="142.7" y="193.7" width="8.6" height="22.1" stroke="#111" stroke-width="0.8" fill="none"/><rect x="144.2" y="195.2" width="5.6" height="19" stroke="#444" stroke-width="0.4" fill="none"/><path d="M139 193.7V215.8" stroke="#555" stroke-width="0.35" fill="none"/><rect x="168.7" y="197.3" width="15.8" height="10.6" stroke="#111" stroke-width="0.9" fill="none"/><path d="M176.6 197.3V207.9" stroke="#111" stroke-width="0.7" fill="none"/><rect x="170" y="198.6" width="5.5" height="8" stroke="#444" stroke-width="0.4" fill="none"/><rect x="177.7" y="198.6" width="5.5" height="8" stroke="#444" stroke-width="0.4" fill="none"/><path d="M165 197.3V215.8" stroke="#555" stroke-width="0.35" fill="none"/><rect x="202.5" y="200.7" width="7.3" height="3.8" stroke="#111" stroke-width="0.7" fill="none"/><path d="M199 200.7V215.8" stroke="#555" stroke-width="0.35" fill="none"/><path d="M123.5 215.8H220" stroke="#555" stroke-width="0.35" fill="none"/><circle cx="147" cy="218.5" r="1.3" fill="none" stroke="#333" stroke-width="0.4"/><circle cx="175" cy="218.5" r="1.3" fill="none" stroke="#333" stroke-width="0.4"/><circle cx="206" cy="218.5" r="1.3" fill="none" stroke="#333" stroke-width="0.4"/><rect x="123.5" y="220.3" width="96.5" height="19.2" stroke="#333" stroke-width="0.4" fill="none"/><path d="M123.5 224.5H220" stroke="#444" stroke-width="0.35" fill="none"/><path d="M123.5 229H220" stroke="#444" stroke-width="0.35" fill="none"/><path d="M123.5 234H220" stroke="#444" stroke-width="0.35" fill="none"/><path d="M131.4 220.3V239.5" stroke="#444" stroke-width="0.35" fill="none"/><path d="M161.9 220.3V239.5" stroke="#444" stroke-width="0.35" fill="none"/><path d="M190.1 220.3V239.5" stroke="#444" stroke-width="0.35" fill="none"/><rect x="138" y="222.0" width="16" height="0.8" stroke="none" stroke-width="0" fill="#bbb"/><rect x="168" y="222.0" width="16" height="0.8" stroke="none" stroke-width="0" fill="#bbb"/><rect x="197" y="222.0" width="16" height="0.8" stroke="none" stroke-width="0" fill="#bbb"/><rect x="138" y="226.5" width="16" height="0.8" stroke="none" stroke-width="0" fill="#bbb"/><rect x="168" y="226.5" width="16" height="0.8" stroke="none" stroke-width="0" fill="#bbb"/><rect x="197" y="226.5" width="16" height="0.8" stroke="none" stroke-width="0" fill="#bbb"/><rect x="138" y="231.0" width="16" height="0.8" stroke="none" stroke-width="0" fill="#bbb"/><rect x="168" y="231.0" width="16" height="0.8" stroke="none" stroke-width="0" fill="#bbb"/><rect x="197" y="231.0" width="16" height="0.8" stroke="none" stroke-width="0" fill="#bbb"/><rect x="138" y="235.5" width="16" height="0.8" stroke="none" stroke-width="0" fill="#bbb"/><rect x="168" y="235.5" width="16" height="0.8" stroke="none" stroke-width="0" fill="#bbb"/><rect x="197" y="235.5" width="16" height="0.8" stroke="none" stroke-width="0" fill="#bbb"/></svg>
</div>
<div class="a" style="left:32px;top:126.3px;width:210px;height:10px;overflow:hidden">
<div class="t w" style="left:57.80px;top:-2.52px;font-size:9px;line-height:9px;color:#e6e6e6;font-weight:normal;transform:scaleX(0.8683);transform-origin:0 0;">[2] Drawing1-Layout1 (2)</div>
</div>
<div class="a" style="left:41px;top:285px;width:185px;height:130px;background:#ffffff;box-shadow:1px 1px 0 #111"></div>
<div class="a" style="left:41px;top:435.2px;width:185px;height:129.5px;background:#ffffff;box-shadow:1px 1px 0 #111"></div>
<div class="a" style="left:41px;top:586px;width:185px;height:34px;background:#ffffff;"></div>
<div class="a" style="left:41px;top:280px;width:185px;height:340px;overflow:hidden">
<svg style="left:-41px;top:-280px" width="1130" height="620" viewBox="0 0 1130 620"><rect x="50.9" y="291.7" width="169.3" height="110.60000000000002" stroke="#333" stroke-width="0.6" fill="none"/><path d="M50.9 392.2H220.2" stroke="#333" stroke-width="0.5" fill="none"/><path d="M60.7 392.2V402.3" stroke="#444" stroke-width="0.4" fill="none"/><path d="M94.4 392.2V402.3" stroke="#444" stroke-width="0.4" fill="none"/><path d="M138.4 392.2V402.3" stroke="#444" stroke-width="0.4" fill="none"/><path d="M180.4 392.2V402.3" stroke="#444" stroke-width="0.4" fill="none"/><path d="M209.3 392.2V402.3" stroke="#444" stroke-width="0.4" fill="none"/><rect x="62" y="396.2" width="31" height="1.2" stroke="none" stroke-width="0" fill="#999"/><rect x="62" y="398.7" width="31" height="2.5" stroke="none" stroke-width="0" fill="#ccc"/><rect x="100" y="396.2" width="30" height="1" stroke="none" stroke-width="0" fill="#aaa"/><rect x="100" y="398.7" width="32" height="1" stroke="none" stroke-width="0" fill="#aaa"/><rect x="182" y="397.2" width="26" height="1" stroke="none" stroke-width="0" fill="#999"/><rect x="182" y="400.2" width="26" height="1.5" stroke="none" stroke-width="0" fill="#777"/><rect x="212" y="396.2" width="6" height="4" stroke="#444" stroke-width="0.4" fill="none"/><path d="M121.6 291.7V392.2M50.9 341.8H121.6M121.6 336.3H220.2M121.6 375.5H220.2M184.7 291.7V336.3" stroke="#333" stroke-width="0.5" fill="none"/><path d="M62 298V330" stroke="#555" stroke-width="0.35" fill="none"/><circle cx="59" cy="298.0" r="1" fill="none" stroke="#555" stroke-width="0.35"/><path d="M60 298.0H76" stroke="#555" stroke-width="0.3" fill="none"/><circle cx="59" cy="306.0" r="1" fill="none" stroke="#555" stroke-width="0.35"/><path d="M60 306.0H76" stroke="#555" stroke-width="0.3" fill="none"/><circle cx="59" cy="314.0" r="1" fill="none" stroke="#555" stroke-width="0.35"/><path d="M60 314.0H76" stroke="#555" stroke-width="0.3" fill="none"/><circle cx="59" cy="322.0" r="1" fill="none" stroke="#555" stroke-width="0.35"/><path d="M60 322.0H76" stroke="#555" stroke-width="0.3" fill="none"/><circle cx="59" cy="330.0" r="1" fill="none" stroke="#555" stroke-width="0.35"/><path d="M60 330.0H76" stroke="#555" stroke-width="0.3" fill="none"/><path d="M73.7 299.3H98.8V328.7H73.7Z" stroke="#111" stroke-width="1.3" fill="none"/><rect x="88" y="301" width="10" height="8" stroke="#111" stroke-width="0.7" fill="none"/><rect x="86" y="312" width="12" height="7" stroke="#111" stroke-width="0.7" fill="none"/><rect x="90" y="320" width="8" height="8" stroke="#111" stroke-width="0.7" fill="none"/><rect x="76" y="321" width="10" height="7" stroke="#111" stroke-width="0.6" fill="none"/><circle cx="81" cy="314" r="1" fill="#111"/><path d="M68 295H108M68 332H108M108 295V332M104 300H112M104 310H112M104 320H112" stroke="#666" stroke-width="0.35" fill="none"/><path d="M73 294V290M98 294V290M85 294V289" stroke="#444" stroke-width="0.4" fill="none"/><path d="M72 337a2.2 2.2 0 0 0 4.4 0z" fill="#111"/><rect x="77" y="335.5" width="20" height="1.5" stroke="none" stroke-width="0" fill="#999"/><path d="M58 353V384" stroke="#555" stroke-width="0.35" fill="none"/><circle cx="55" cy="353.0" r="1" fill="none" stroke="#555" stroke-width="0.35"/><path d="M56 353.0H72" stroke="#555" stroke-width="0.3" fill="none"/><circle cx="55" cy="360.75" r="1" fill="none" stroke="#555" stroke-width="0.35"/><path d="M56 360.75H72" stroke="#555" stroke-width="0.3" fill="none"/><circle cx="55" cy="368.5" r="1" fill="none" stroke="#555" stroke-width="0.35"/><path d="M56 368.5H72" stroke="#555" stroke-width="0.3" fill="none"/><circle cx="55" cy="376.25" r="1" fill="none" stroke="#555" stroke-width="0.35"/><path d="M56 376.25H72" stroke="#555" stroke-width="0.3" fill="none"/><circle cx="55" cy="384.0" r="1" fill="none" stroke="#555" stroke-width="0.35"/><path d="M56 384.0H72" stroke="#555" stroke-width="0.3" fill="none"/><path d="M72.6 353H98.3V382.7H72.6Z" stroke="#111" stroke-width="1.3" fill="none"/><path d="M74.0 355V380" stroke="#777" stroke-width="0.3" fill="none"/><path d="M75.5 355V380" stroke="#777" stroke-width="0.3" fill="none"/><path d="M77.0 355V380" stroke="#777" stroke-width="0.3" fill="none"/><path d="M78.5 355V380" stroke="#777" stroke-width="0.3" fill="none"/><path d="M80.0 355V380" stroke="#777" stroke-width="0.3" fill="none"/><path d="M81.5 355V380" stroke="#777" stroke-width="0.3" fill="none"/><path d="M83.0 355V380" stroke="#777" stroke-width="0.3" fill="none"/><path d="M84.5 355V380" stroke="#777" stroke-width="0.3" fill="none"/><path d="M86.0 355V380" stroke="#777" stroke-width="0.3" fill="none"/><path d="M87.5 355V380" stroke="#777" stroke-width="0.3" fill="none"/><rect x="86" y="355" width="11" height="10" stroke="#111" stroke-width="0.8" fill="none"/><rect x="87" y="367" width="10" height="8" stroke="#111" stroke-width="0.8" fill="none"/><rect x="78" y="376" width="10" height="6" stroke="#111" stroke-width="0.7" fill="none"/><path d="M66 350H110M66 386H110M110 350V386M100 360H114M100 372H114" stroke="#666" stroke-width="0.35" fill="none"/><path d="M72 390a2.2 2.2 0 0 0 4.4 0z" fill="#111"/><rect x="77" y="388.5" width="20" height="1.5" stroke="none" stroke-width="0" fill="#999"/><rect x="128" y="303.7" width="16.5" height="15.3" stroke="#333" stroke-width="0.5" fill="none"/><rect x="132" y="307" width="9" height="9" stroke="#111" stroke-width="0.7" fill="none"/><rect x="134.5" y="309.5" width="4" height="4" stroke="none" stroke-width="0" fill="#333"/><path d="M136 300V296M130 298L128 294" stroke="#555" stroke-width="0.35" fill="none"/><rect x="132" y="322" width="6" height="1" stroke="none" stroke-width="0" fill="#999"/><rect x="146" y="331" width="12" height="1" stroke="none" stroke-width="0" fill="#999"/><rect x="158.6" y="305" width="12" height="14" stroke="#333" stroke-width="0.5" fill="none"/><path d="M170 295V320M166 320H178" stroke="#111" stroke-width="1.0" fill="none"/><path d="M171 300.0h7" stroke="#333" stroke-width="0.8" fill="none"/><path d="M171 302.2h7" stroke="#333" stroke-width="0.8" fill="none"/><path d="M171 304.4h7" stroke="#333" stroke-width="0.8" fill="none"/><path d="M171 306.6h7" stroke="#333" stroke-width="0.8" fill="none"/><path d="M171 308.8h7" stroke="#333" stroke-width="0.8" fill="none"/><rect x="162" y="324" width="10" height="1" stroke="none" stroke-width="0" fill="#999"/><rect x="188" y="307" width="10" height="12" stroke="#333" stroke-width="0.5" fill="none"/><path d="M197 297V322M186 322H204" stroke="#111" stroke-width="1.0" fill="none"/><path d="M198 302.0h7" stroke="#333" stroke-width="0.8" fill="none"/><path d="M198 304.2h7" stroke="#333" stroke-width="0.8" fill="none"/><path d="M198 306.4h7" stroke="#333" stroke-width="0.8" fill="none"/><path d="M198 308.6h7" stroke="#333" stroke-width="0.8" fill="none"/><path d="M198 310.8h7" stroke="#333" stroke-width="0.8" fill="none"/><rect x="190" y="330" width="20" height="1" stroke="none" stroke-width="0" fill="#999"/><rect x="140" y="346" width="17.5" height="17.5" stroke="#333" stroke-width="0.5" fill="none"/><rect x="144" y="350" width="9" height="9" stroke="#111" stroke-width="0.7" fill="none"/><rect x="146" y="352" width="5" height="4" stroke="none" stroke-width="0" fill="#333"/><rect x="170.6" y="345" width="10" height="14" stroke="#333" stroke-width="0.5" fill="none"/><path d="M180 338.5V363.5M176 363.5H192" stroke="#111" stroke-width="1.0" fill="none"/><path d="M181 343.0h7" stroke="#333" stroke-width="0.8" fill="none"/><path d="M181 345.2h7" stroke="#333" stroke-width="0.8" fill="none"/><path d="M181 347.4h7" stroke="#333" stroke-width="0.8" fill="none"/><path d="M181 349.6h7" stroke="#333" stroke-width="0.8" fill="none"/><path d="M181 351.8h7" stroke="#333" stroke-width="0.8" fill="none"/><rect x="160" y="371" width="12" height="1" stroke="none" stroke-width="0" fill="#999"/><rect x="135.8" y="378.8" width="69.6" height="6.5" stroke="#111" stroke-width="0.6" fill="none"/><rect x="137" y="380.5" width="67" height="3" stroke="none" stroke-width="0" fill="#888"/><rect x="127.5" y="378" width="5" height="6" stroke="#222" stroke-width="0.5" fill="none"/><rect x="210" y="378" width="5" height="6" stroke="#222" stroke-width="0.5" fill="none"/><rect x="158" y="388" width="12" height="1" stroke="none" stroke-width="0" fill="#999"/><path d="M70 294H104M70 296.5H104M73.7 292V299M80 292V299M88 292V299M98.8 292V299" stroke="#555" stroke-width="0.35" fill="none"/><path d="M110 298V330M113 303H117M113 312H117M113 322H117" stroke="#555" stroke-width="0.35" fill="none"/><circle cx="115.5" cy="303" r="1" fill="none" stroke="#555" stroke-width="0.35"/><circle cx="115.5" cy="311" r="1" fill="none" stroke="#555" stroke-width="0.35"/><circle cx="115.5" cy="319" r="1" fill="none" stroke="#555" stroke-width="0.35"/><circle cx="115.5" cy="327" r="1" fill="none" stroke="#555" stroke-width="0.35"/><path d="M80 300V312H86V320M73.7 312H80M90 309V320" stroke="#111" stroke-width="0.8" fill="none"/><path d="M68 347H104M68 349.5H104M72.6 345V352M85 345V352M98.3 345V352" stroke="#555" stroke-width="0.35" fill="none"/><path d="M86 366H98M86 376H98M86 353V382" stroke="#111" stroke-width="0.8" fill="none"/><rect x="57" y="300" width="6" height="1" stroke="none" stroke-width="0" fill="#888"/><path d="M60 302L70 309" stroke="#555" stroke-width="0.3" fill="none"/><rect x="133" y="322.5" width="6" height="0.8" stroke="none" stroke-width="0" fill="#666"/><rect x="162" y="322" width="8" height="0.8" stroke="none" stroke-width="0" fill="#666"/><rect x="191" y="323" width="8" height="0.8" stroke="none" stroke-width="0" fill="#666"/><rect x="146" y="330" width="14" height="0.9" stroke="none" stroke-width="0" fill="#555"/><rect x="188" y="331" width="22" height="0.9" stroke="none" stroke-width="0" fill="#555"/><rect x="146" y="367" width="6" height="0.8" stroke="none" stroke-width="0" fill="#666"/><rect x="175" y="367" width="8" height="0.8" stroke="none" stroke-width="0" fill="#666"/><rect x="159" y="371" width="14" height="0.9" stroke="none" stroke-width="0" fill="#555"/><rect x="170" y="388" width="18" height="0.9" stroke="none" stroke-width="0" fill="#555"/><path d="M158.6 311H170M186 315H197M170.6 353H180" stroke="#444" stroke-width="0.5" fill="none"/><path d="M137 379V385" stroke="#444" stroke-width="0.4" fill="none"/><path d="M148 379V385" stroke="#444" stroke-width="0.4" fill="none"/><path d="M159 379V385" stroke="#444" stroke-width="0.4" fill="none"/><path d="M170 379V385" stroke="#444" stroke-width="0.4" fill="none"/><path d="M181 379V385" stroke="#444" stroke-width="0.4" fill="none"/><path d="M192 379V385" stroke="#444" stroke-width="0.4" fill="none"/><rect x="50.9" y="441.7" width="169.3" height="110.59999999999997" stroke="#333" stroke-width="0.6" fill="none"/><path d="M50.9 542.1999999999999H220.2" stroke="#333" stroke-width="0.5" fill="none"/><path d="M60.7 542.1999999999999V552.3" stroke="#444" stroke-width="0.4" fill="none"/><path d="M94.4 542.1999999999999V552.3" stroke="#444" stroke-width="0.4" fill="none"/><path d="M138.4 542.1999999999999V552.3" stroke="#444" stroke-width="0.4" fill="none"/><path d="M180.4 542.1999999999999V552.3" stroke="#444" stroke-width="0.4" fill="none"/><path d="M209.3 542.1999999999999V552.3" stroke="#444" stroke-width="0.4" fill="none"/><rect x="62" y="546.1999999999999" width="31" height="1.2" stroke="none" stroke-width="0" fill="#999"/><rect x="62" y="548.6999999999999" width="31" height="2.5" stroke="none" stroke-width="0" fill="#ccc"/><rect x="100" y="546.1999999999999" width="30" height="1" stroke="none" stroke-width="0" fill="#aaa"/><rect x="100" y="548.6999999999999" width="32" height="1" stroke="none" stroke-width="0" fill="#aaa"/><rect x="182" y="547.1999999999999" width="26" height="1" stroke="none" stroke-width="0" fill="#999"/><rect x="182" y="550.1999999999999" width="26" height="1.5" stroke="none" stroke-width="0" fill="#777"/><rect x="212" y="546.1999999999999" width="6" height="4" stroke="#444" stroke-width="0.4" fill="none"/><path d="M116.2 441.7V542.2M181.5 441.7V509.2M50.9 491.8H116.2M116.2 509.2H220.2M171.7 509.2V542.2" stroke="#333" stroke-width="0.5" fill="none"/><path d="M59 450V482" stroke="#555" stroke-width="0.35" fill="none"/><circle cx="56" cy="450.0" r="1" fill="none" stroke="#555" stroke-width="0.35"/><path d="M57 450.0H73" stroke="#555" stroke-width="0.3" fill="none"/><circle cx="56" cy="458.0" r="1" fill="none" stroke="#555" stroke-width="0.35"/><path d="M57 458.0H73" stroke="#555" stroke-width="0.3" fill="none"/><circle cx="56" cy="466.0" r="1" fill="none" stroke="#555" stroke-width="0.35"/><path d="M57 466.0H73" stroke="#555" stroke-width="0.3" fill="none"/><circle cx="56" cy="474.0" r="1" fill="none" stroke="#555" stroke-width="0.35"/><path d="M57 474.0H73" stroke="#555" stroke-width="0.3" fill="none"/><circle cx="56" cy="482.0" r="1" fill="none" stroke="#555" stroke-width="0.35"/><path d="M57 482.0H73" stroke="#555" stroke-width="0.3" fill="none"/><path d="M62.8 452H99.8V482H62.8Z" stroke="#222" stroke-width="0.7" fill="none"/><path d="M76 453V482M66 462H76M66 472H76M88 456V480M92 470H99" stroke="#666" stroke-width="0.5" fill="none"/><circle cx="76" cy="457" r="0.9" fill="#e33"/><circle cx="76" cy="470" r="0.9" fill="#e33"/><circle cx="76" cy="476" r="0.9" fill="#e33"/><path d="M75 448H98" stroke="#e33" stroke-width="0.9" fill="none"/><path d="M105 452V482M108 456H112M108 470H112" stroke="#666" stroke-width="0.35" fill="none"/><path d="M72 488a2.2 2.2 0 0 0 4.4 0z" fill="#111"/><rect x="77" y="486.5" width="20" height="1.5" stroke="none" stroke-width="0" fill="#999"/><path d="M71 485H100" stroke="#444" stroke-width="0.4" fill="none"/><path d="M59 502V534" stroke="#555" stroke-width="0.35" fill="none"/><circle cx="56" cy="502.0" r="1" fill="none" stroke="#555" stroke-width="0.35"/><path d="M57 502.0H73" stroke="#555" stroke-width="0.3" fill="none"/><circle cx="56" cy="510.0" r="1" fill="none" stroke="#555" stroke-width="0.35"/><path d="M57 510.0H73" stroke="#555" stroke-width="0.3" fill="none"/><circle cx="56" cy="518.0" r="1" fill="none" stroke="#555" stroke-width="0.35"/><path d="M57 518.0H73" stroke="#555" stroke-width="0.3" fill="none"/><circle cx="56" cy="526.0" r="1" fill="none" stroke="#555" stroke-width="0.35"/><path d="M57 526.0H73" stroke="#555" stroke-width="0.3" fill="none"/><circle cx="56" cy="534.0" r="1" fill="none" stroke="#555" stroke-width="0.35"/><path d="M57 534.0H73" stroke="#555" stroke-width="0.3" fill="none"/><path d="M64 503H103V534H64Z" stroke="#222" stroke-width="0.7" fill="none"/><path d="M76 504V534M66 512H76M66 522H76M90 506V532M96 510H103M96 520H103" stroke="#666" stroke-width="0.5" fill="none"/><rect x="106" y="504" width="8" height="28" stroke="#444" stroke-width="0.4" fill="none"/><path d="M107 508h6M107 512h6M107 516h6M107 520h6" stroke="#666" stroke-width="0.4" fill="none"/><path d="M72 539a2.2 2.2 0 0 0 4.4 0z" fill="#111"/><rect x="77" y="537.5" width="20" height="1.5" stroke="none" stroke-width="0" fill="#999"/><path d="M71 536H100" stroke="#444" stroke-width="0.4" fill="none"/><rect x="134.7" y="448.7" width="25" height="23.5" stroke="#e33" stroke-width="0.9" fill="none"/><rect x="150" y="450" width="8" height="9" stroke="#222" stroke-width="0.6" fill="none"/><rect x="150" y="461" width="8" height="10" stroke="#222" stroke-width="0.6" fill="none"/><rect x="137" y="455" width="8" height="8" stroke="#222" stroke-width="0.6" fill="none"/><path d="M149 449V472M135 472H160" stroke="#e33" stroke-width="0.9" fill="none"/><path d="M126 446H135M131 452V470" stroke="#555" stroke-width="0.35" fill="none"/><rect x="132.5" y="480.9" width="28.3" height="17.4" stroke="none" stroke-width="0" fill="#111"/><rect x="135" y="484" width="13" height="9" stroke="none" stroke-width="0" fill="#444"/><path d="M138 496L150 485" stroke="#fff" stroke-width="1.0" fill="none"/><rect x="151" y="483" width="7" height="12" stroke="none" stroke-width="0" fill="#eee"/><rect x="163" y="483" width="9" height="2.5" stroke="#333" stroke-width="0.4" fill="none"/><rect x="163" y="491" width="11" height="2.5" stroke="#333" stroke-width="0.4" fill="none"/><rect x="138" y="504" width="14" height="1" stroke="none" stroke-width="0" fill="#999"/><rect x="120.5" y="513.5" width="49" height="25" stroke="#333" stroke-width="0.4" fill="none"/><path d="M121 517H169" stroke="#888" stroke-width="0.4" fill="none"/><path d="M121 519H169" stroke="#888" stroke-width="0.4" fill="none"/><path d="M121 521H169" stroke="#888" stroke-width="0.4" fill="none"/><path d="M121 523H169" stroke="#888" stroke-width="0.4" fill="none"/><path d="M121 525H169" stroke="#888" stroke-width="0.4" fill="none"/><path d="M121 527H169" stroke="#888" stroke-width="0.4" fill="none"/><path d="M121 529H169" stroke="#888" stroke-width="0.4" fill="none"/><path d="M121 531H169" stroke="#888" stroke-width="0.4" fill="none"/><path d="M121 533H169" stroke="#888" stroke-width="0.4" fill="none"/><path d="M121 535H169" stroke="#888" stroke-width="0.4" fill="none"/><path d="M121 537H169" stroke="#888" stroke-width="0.4" fill="none"/><path d="M131 513.5V538.5" stroke="#555" stroke-width="0.4" fill="none"/><path d="M143 513.5V538.5" stroke="#555" stroke-width="0.4" fill="none"/><path d="M156 513.5V538.5" stroke="#555" stroke-width="0.4" fill="none"/><rect x="126" y="540" width="38" height="1" stroke="none" stroke-width="0" fill="#999"/><rect x="186" y="445" width="28" height="1.5" stroke="none" stroke-width="0" fill="#666"/><rect x="186" y="449.0" width="18" height="0.9" stroke="none" stroke-width="0" fill="#aaa"/><rect x="186" y="451.5" width="26" height="0.9" stroke="none" stroke-width="0" fill="#aaa"/><rect x="186" y="454.0" width="26" height="0.9" stroke="none" stroke-width="0" fill="#aaa"/><rect x="186" y="456.5" width="26" height="0.9" stroke="none" stroke-width="0" fill="#aaa"/><rect x="186" y="459.0" width="18" height="0.9" stroke="none" stroke-width="0" fill="#aaa"/><rect x="186" y="461.5" width="26" height="0.9" stroke="none" stroke-width="0" fill="#aaa"/><rect x="186" y="464.0" width="26" height="0.9" stroke="none" stroke-width="0" fill="#aaa"/><rect x="186" y="466.5" width="26" height="0.9" stroke="none" stroke-width="0" fill="#aaa"/><rect x="186" y="469.0" width="18" height="0.9" stroke="none" stroke-width="0" fill="#aaa"/><rect x="186" y="471.5" width="26" height="0.9" stroke="none" stroke-width="0" fill="#aaa"/><rect x="186" y="474.0" width="26" height="0.9" stroke="none" stroke-width="0" fill="#aaa"/><rect x="186" y="476.5" width="26" height="0.9" stroke="none" stroke-width="0" fill="#aaa"/><rect x="186" y="479.0" width="18" height="0.9" stroke="none" stroke-width="0" fill="#aaa"/><rect x="186" y="481.5" width="26" height="0.9" stroke="none" stroke-width="0" fill="#aaa"/><rect x="186" y="484.0" width="26" height="0.9" stroke="none" stroke-width="0" fill="#aaa"/><rect x="186" y="486.5" width="26" height="0.9" stroke="none" stroke-width="0" fill="#aaa"/><rect x="186" y="489.0" width="18" height="0.9" stroke="none" stroke-width="0" fill="#aaa"/><rect x="186" y="491.5" width="26" height="0.9" stroke="none" stroke-width="0" fill="#aaa"/><rect x="186" y="494.0" width="26" height="0.9" stroke="none" stroke-width="0" fill="#aaa"/><rect x="186" y="496.5" width="26" height="0.9" stroke="none" stroke-width="0" fill="#aaa"/><rect x="186" y="499.0" width="18" height="0.9" stroke="none" stroke-width="0" fill="#aaa"/><rect x="186" y="501.5" width="26" height="0.9" stroke="none" stroke-width="0" fill="#aaa"/><rect x="176" y="512" width="28" height="1.3" stroke="none" stroke-width="0" fill="#666"/><rect x="178" y="515.5" width="8" height="0.9" stroke="none" stroke-width="0" fill="#999"/><rect x="190" y="515.5" width="18" height="0.9" stroke="none" stroke-width="0" fill="#aaa"/><rect x="178" y="518.0" width="8" height="0.9" stroke="none" stroke-width="0" fill="#999"/><rect x="190" y="518.0" width="18" height="0.9" stroke="none" stroke-width="0" fill="#aaa"/><rect x="178" y="520.5" width="8" height="0.9" stroke="none" stroke-width="0" fill="#999"/><rect x="190" y="520.5" width="18" height="0.9" stroke="none" stroke-width="0" fill="#aaa"/><rect x="178" y="523.0" width="8" height="0.9" stroke="none" stroke-width="0" fill="#999"/><rect x="190" y="523.0" width="18" height="0.9" stroke="none" stroke-width="0" fill="#aaa"/><rect x="178" y="525.5" width="8" height="0.9" stroke="none" stroke-width="0" fill="#999"/><rect x="190" y="525.5" width="18" height="0.9" stroke="none" stroke-width="0" fill="#aaa"/><rect x="178" y="528.0" width="8" height="0.9" stroke="none" stroke-width="0" fill="#999"/><rect x="190" y="528.0" width="18" height="0.9" stroke="none" stroke-width="0" fill="#aaa"/><rect x="178" y="530.5" width="8" height="0.9" stroke="none" stroke-width="0" fill="#999"/><rect x="190" y="530.5" width="18" height="0.9" stroke="none" stroke-width="0" fill="#aaa"/><rect x="178" y="533.0" width="8" height="0.9" stroke="none" stroke-width="0" fill="#999"/><rect x="190" y="533.0" width="18" height="0.9" stroke="none" stroke-width="0" fill="#aaa"/><rect x="178" y="535.5" width="8" height="0.9" stroke="none" stroke-width="0" fill="#999"/><rect x="190" y="535.5" width="18" height="0.9" stroke="none" stroke-width="0" fill="#aaa"/><path d="M62.8 447H99.8M62.8 449.5H99.8M66 445V452M76 445V452M88 445V452M99.8 445V452" stroke="#555" stroke-width="0.35" fill="none"/><path d="M62.8 462H76M62.8 472H76M99.8 460H105M99.8 470H105" stroke="#333" stroke-width="0.5" fill="none"/><path d="M64 498H103M64 500.5H103M70 496V503M85 496V503M103 496V503" stroke="#555" stroke-width="0.35" fill="none"/><path d="M64 513H76M64 523H76M80 510V530M80 520H90" stroke="#333" stroke-width="0.5" fill="none"/><rect x="63" y="452" width="2" height="30" stroke="none" stroke-width="0" fill="#999"/><rect x="64" y="503" width="2" height="31" stroke="none" stroke-width="0" fill="#999"/><rect x="138" y="476" width="16" height="0.9" stroke="none" stroke-width="0" fill="#666"/><rect x="135" y="503" width="24" height="0.9" stroke="none" stroke-width="0" fill="#555"/><rect x="122" y="514" width="48" height="2.2" stroke="none" stroke-width="0" fill="#bbb"/><rect x="122" y="518" width="9" height="1" stroke="none" stroke-width="0" fill="#ccc"/><rect x="122" y="520" width="9" height="1" stroke="none" stroke-width="0" fill="#ccc"/><rect x="122" y="522" width="9" height="1" stroke="none" stroke-width="0" fill="#ccc"/><rect x="122" y="524" width="9" height="1" stroke="none" stroke-width="0" fill="#ccc"/><rect x="122" y="526" width="9" height="1" stroke="none" stroke-width="0" fill="#ccc"/><rect x="122" y="528" width="9" height="1" stroke="none" stroke-width="0" fill="#ccc"/><rect x="122" y="530" width="9" height="1" stroke="none" stroke-width="0" fill="#ccc"/><rect x="122" y="532" width="9" height="1" stroke="none" stroke-width="0" fill="#ccc"/><rect x="122" y="534" width="9" height="1" stroke="none" stroke-width="0" fill="#ccc"/><rect x="122" y="536" width="9" height="1" stroke="none" stroke-width="0" fill="#ccc"/><rect x="50.9" y="591.4" width="169" height="40" stroke="#333" stroke-width="0.6" fill="none"/><path d="M165.8 591.4V620" stroke="#333" stroke-width="0.5" fill="none"/><path d="M72.8 604.4H98V625H72.8Z" stroke="#111" stroke-width="1.2" fill="none"/><path d="M85 604V625M90 604V612H98" stroke="#222" stroke-width="0.7" fill="none"/><path d="M72 598H98M72 596V600M80 596V600M85 595V600M98 596V600" stroke="#444" stroke-width="0.4" fill="none"/><circle cx="85" cy="595" r="1.3" fill="none" stroke="#444" stroke-width="0.4"/><path d="M56 604V622" stroke="#555" stroke-width="0.35" fill="none"/><circle cx="53" cy="604.0" r="1" fill="none" stroke="#555" stroke-width="0.35"/><path d="M54 604.0H70" stroke="#555" stroke-width="0.3" fill="none"/><circle cx="53" cy="613.0" r="1" fill="none" stroke="#555" stroke-width="0.35"/><path d="M54 613.0H70" stroke="#555" stroke-width="0.3" fill="none"/><circle cx="53" cy="622.0" r="1" fill="none" stroke="#555" stroke-width="0.35"/><path d="M54 622.0H70" stroke="#555" stroke-width="0.3" fill="none"/><path d="M110 604V625M103 604H112" stroke="#666" stroke-width="0.35" fill="none"/><rect x="122.4" y="595.5" width="25.2" height="30" stroke="#222" stroke-width="0.5" fill="none"/><rect x="126" y="603" width="19" height="20" stroke="#111" stroke-width="0.9" fill="none"/><circle cx="131" cy="609" r="3" fill="none" stroke="#222" stroke-width="0.6"/><circle cx="140" cy="609" r="3" fill="none" stroke="#222" stroke-width="0.6"/><path d="M124 598H146M117 604V625M150 604V625M127 615L144 621M127 621L144 615" stroke="#333" stroke-width="0.5" fill="none"/><path d="M180 601H205M186 597V620M197 597V620" stroke="#444" stroke-width="0.5" fill="none"/><path d="M179 603h4l2-1 3 1 3-1 3 1h9" stroke="#555" stroke-width="0.45" fill="none"/><path d="M179 606h4l2-1 3 1 3-1 3 1h9" stroke="#555" stroke-width="0.45" fill="none"/><path d="M179 609h4l2-1 3 1 3-1 3 1h9" stroke="#555" stroke-width="0.45" fill="none"/><path d="M179 612h4l2-1 3 1 3-1 3 1h9" stroke="#555" stroke-width="0.45" fill="none"/><path d="M179 615h4l2-1 3 1 3-1 3 1h9" stroke="#555" stroke-width="0.45" fill="none"/><path d="M179 618h4l2-1 3 1 3-1 3 1h9" stroke="#555" stroke-width="0.45" fill="none"/></svg>
</div>
<div class="t w" style="left:89.80px;top:273.88px;font-size:9px;line-height:9px;color:#e6e6e6;font-weight:normal;transform:scaleX(0.8683);transform-origin:0 0;">[3] Drawing1-Layout1 (3)</div>
<div class="t w" style="left:89.80px;top:423.88px;font-size:9px;line-height:9px;color:#e6e6e6;font-weight:normal;transform:scaleX(0.8683);transform-origin:0 0;">[4] Drawing1-Layout1 (4)</div>
<div class="t w" style="left:89.80px;top:573.88px;font-size:9px;line-height:9px;color:#e6e6e6;font-weight:normal;transform:scaleX(0.8683);transform-origin:0 0;">[5] Drawing1-Layout1 (5)</div>
<div class="a" style="left:583px;top:82px;width:323.5px;height:288.5px;border-radius:7px;background:#f0f0f0;box-shadow:0 12px 30px rgba(0,0,0,0.42),0 2px 6px rgba(0,0,0,0.2),0 0 0 1px rgba(0,0,0,0.14);overflow:hidden">
<div class="a" style="left:0;top:0;width:324px;height:18px;background:#eef2f9"></div>
<div class="t" style="left:4.00px;top:4.83px;font-size:8px;line-height:8px;color:#000;font-weight:normal;transform:scaleX(0.8877);transform-origin:0 0;">Tags</div>
<svg style="left:0;top:0" width="324" height="40"><path d="M244.5 8.5h7" stroke="#222" stroke-width="1.1"/><rect x="274.5" y="5.5" width="6.5" height="6.5" rx="1.3" fill="none" stroke="#222" stroke-width="1.1"/><path d="M305 5l7 7M312 5l-7 7" stroke="#222" stroke-width="1.1"/></svg>
<div class="a" style="left:4px;top:24px;width:296px;height:10px;background:#fff;border-bottom:1px solid #4a86d8"></div>
<div class="a" style="left:4px;top:24.5px;width:22px;height:8.5px;background:#0a5fd3"></div>
<div class="t" style="left:4.50px;top:25.57px;font-size:7.6px;line-height:7.6px;color:#fff;font-weight:normal;transform:scaleX(0.9207);transform-origin:0 0;">Main 2</div>
<div class="a" style="left:305px;top:24.5px;width:12.5px;height:12.5px;background:#fff;border-radius:2px;box-shadow:0 0 1px rgba(0,0,0,.25)"></div>
<svg style="left:0;top:0" width="324" height="40"><path d="M307.5 27l7.5 8M315 27l-7.5 8" stroke="#e0141c" stroke-width="2"/></svg>
<div class="a" style="left:1px;top:44.5px;width:321px;height:217.5px;background:#fff;border:1px solid #8a8a8a;border-right-color:#bdbdbd;border-bottom-color:#9a9a9a;overflow:hidden">
<svg style="left:0;top:0" width="321" height="217.5"><rect x="12" y="18.5" width="119" height="7.95" fill="#d9d9d9"/><rect x="12" y="26.45" width="119" height="7.95" fill="#d9d9d9"/><rect x="12" y="34.4" width="119" height="7.95" fill="#d9d9d9"/><rect x="12" y="42.35" width="119" height="7.95" fill="#d9d9d9"/><rect x="12" y="50.3" width="119" height="7.95" fill="#d9d9d9"/><rect x="12" y="58.25" width="119" height="7.95" fill="#d9d9d9"/><rect x="12" y="66.2" width="119" height="7.95" fill="#d9d9d9"/><rect x="12" y="74.15" width="119" height="7.95" fill="#d9d9d9"/><rect x="12" y="82.1" width="119" height="7.95" fill="#d9d9d9"/><rect x="12" y="90.05" width="119" height="7.95" fill="#d9d9d9"/><rect x="12" y="98.0" width="119" height="7.95" fill="#d9d9d9"/><rect x="12" y="105.95" width="119" height="7.95" fill="#d9d9d9"/><rect x="12" y="113.9" width="119" height="7.95" fill="#d9d9d9"/><rect x="12" y="121.85" width="119" height="7.95" fill="#d9d9d9"/><rect x="12" y="129.8" width="119" height="7.95" fill="#d9d9d9"/><rect x="12" y="137.75" width="119" height="7.95" fill="#d9d9d9"/><rect x="12" y="145.7" width="119" height="7.95" fill="#d9d9d9"/><rect x="12" y="153.65" width="119" height="7.95" fill="#d9d9d9"/><rect x="12" y="161.6" width="119" height="7.95" fill="#d9d9d9"/><rect x="12" y="169.55" width="119" height="7.95" fill="#d9d9d9"/><rect x="12" y="177.5" width="119" height="7.95" fill="#d9d9d9"/><rect x="12" y="185.45" width="119" height="7.95" fill="#d9d9d9"/><rect x="12" y="193.4" width="119" height="7.95" fill="#d9d9d9"/><rect x="12" y="201.35" width="119" height="7.95" fill="#d9d9d9"/><rect x="12" y="209.3" width="119" height="7.95" fill="#d9d9d9"/><path d="M-1 18.5H309" stroke="#e4e4e4" stroke-width="1"/><path d="M-1 26.45H309" stroke="#e4e4e4" stroke-width="1"/><path d="M-1 34.4H309" stroke="#e4e4e4" stroke-width="1"/><path d="M-1 42.35H309" stroke="#e4e4e4" stroke-width="1"/><path d="M-1 50.3H309" stroke="#e4e4e4" stroke-width="1"/><path d="M-1 58.25H309" stroke="#e4e4e4" stroke-width="1"/><path d="M-1 66.2H309" stroke="#e4e4e4" stroke-width="1"/><path d="M-1 74.15H309" stroke="#e4e4e4" stroke-width="1"/><path d="M-1 82.1H309" stroke="#e4e4e4" stroke-width="1"/><path d="M-1 90.05H309" stroke="#e4e4e4" stroke-width="1"/><path d="M-1 98.0H309" stroke="#e4e4e4" stroke-width="1"/><path d="M-1 105.95H309" stroke="#e4e4e4" stroke-width="1"/><path d="M-1 113.9H309" stroke="#e4e4e4" stroke-width="1"/><path d="M-1 121.85H309" stroke="#e4e4e4" stroke-width="1"/><path d="M-1 129.8H309" stroke="#e4e4e4" stroke-width="1"/><path d="M-1 137.75H309" stroke="#e4e4e4" stroke-width="1"/><path d="M-1 145.7H309" stroke="#e4e4e4" stroke-width="1"/><path d="M-1 153.65H309" stroke="#e4e4e4" stroke-width="1"/><path d="M-1 161.6H309" stroke="#e4e4e4" stroke-width="1"/><path d="M-1 169.55H309" stroke="#e4e4e4" stroke-width="1"/><path d="M-1 177.5H309" stroke="#e4e4e4" stroke-width="1"/><path d="M-1 185.45H309" stroke="#e4e4e4" stroke-width="1"/><path d="M-1 193.4H309" stroke="#e4e4e4" stroke-width="1"/><path d="M-1 201.35H309" stroke="#e4e4e4" stroke-width="1"/><path d="M-1 209.3H309" stroke="#e4e4e4" stroke-width="1"/><path d="M-1 217.25H309" stroke="#e4e4e4" stroke-width="1"/><path d="M-1 18.5H309" stroke="#d0d0d0" stroke-width="1"/><path d="M11.5 0V217.5" stroke="#d4d4d4" stroke-width="1"/><path d="M71 0V217.5" stroke="#d4d4d4" stroke-width="1"/><path d="M131 0V217.5" stroke="#d4d4d4" stroke-width="1"/><path d="M190 0V217.5" stroke="#d4d4d4" stroke-width="1"/><path d="M249.5 0V217.5" stroke="#d4d4d4" stroke-width="1"/><path d="M309 0V217.5" stroke="#d4d4d4" stroke-width="1"/><path d="M71 18.5V217.5" stroke="#c8c8c8" stroke-width="1"/><rect x="131.5" y="27.0" width="58" height="7.6" fill="#0b6fd9"/><rect x="309.5" y="0" width="12" height="217.5" fill="#f6f6f6"/><rect x="314" y="11.0" width="1.6" height="126" fill="#8a8a8a"/><path d="M0.5 29.0l2 1.5-2 1.5z" fill="#222"/></svg>
<div class="t" style="left:15.00px;top:6.21px;font-size:7.2px;line-height:7.2px;color:#000;font-weight:normal;transform:scaleX(0.9754);transform-origin:0 0;">File Name</div>
<div class="t" style="left:74.90px;top:6.21px;font-size:7.2px;line-height:7.2px;color:#000;font-weight:normal;transform:scaleX(0.9882);transform-origin:0 0;">Page Label</div>
<div class="t" style="left:134.00px;top:6.21px;font-size:7.2px;line-height:7.2px;color:#000;font-weight:normal;transform:scaleX(0.9695);transform-origin:0 0;">Sheet Name</div>
<div class="t" style="left:193.00px;top:6.21px;font-size:7.2px;line-height:7.2px;color:#000;font-weight:normal;transform:scaleX(0.9759);transform-origin:0 0;">Sheet Number</div>
<div class="t" style="left:252.90px;top:1.91px;font-size:7.2px;line-height:7.2px;color:#000;font-weight:normal;transform:scaleX(0.9779);transform-origin:0 0;">Revision</div>
<div class="t" style="left:252.90px;top:9.91px;font-size:7.2px;line-height:7.2px;color:#000;font-weight:normal;transform:scaleX(0.9529);transform-origin:0 0;">Number</div>
<div class="t" style="left:14.00px;top:19.61px;font-size:7.2px;line-height:7.2px;color:#000;font-weight:normal;transform:scaleX(0.9778);transform-origin:0 0;">3-bedroom-bun...</div>
<div class="t" style="left:73.40px;top:19.61px;font-size:7.2px;line-height:7.2px;color:#000;font-weight:normal;transform:scaleX(0.9788);transform-origin:0 0;">[1] Drawing1-L...</div>
<div class="t" style="left:133.00px;top:19.61px;font-size:7.2px;line-height:7.2px;color:#000;font-weight:normal;">Main 1</div>
<div class="t" style="left:14.00px;top:27.56px;font-size:7.2px;line-height:7.2px;color:#000;font-weight:normal;transform:scaleX(0.9778);transform-origin:0 0;">3-bedroom-bun...</div>
<div class="t" style="left:73.40px;top:27.56px;font-size:7.2px;line-height:7.2px;color:#000;font-weight:normal;transform:scaleX(0.9788);transform-origin:0 0;">[2] Drawing1-L...</div>
<div class="t" style="left:133.00px;top:27.56px;font-size:7.2px;line-height:7.2px;color:#fff;font-weight:normal;">Main 2</div>
<div class="t" style="left:14.00px;top:35.51px;font-size:7.2px;line-height:7.2px;color:#000;font-weight:normal;transform:scaleX(0.9778);transform-origin:0 0;">3-bedroom-bun...</div>
<div class="t" style="left:73.40px;top:35.51px;font-size:7.2px;line-height:7.2px;color:#000;font-weight:normal;transform:scaleX(0.9788);transform-origin:0 0;">[3] Drawing1-L...</div>
<div class="t" style="left:133.00px;top:35.51px;font-size:7.2px;line-height:7.2px;color:#000;font-weight:normal;">Main 3</div>
<div class="t" style="left:14.00px;top:43.46px;font-size:7.2px;line-height:7.2px;color:#000;font-weight:normal;transform:scaleX(0.9778);transform-origin:0 0;">3-bedroom-bun...</div>
<div class="t" style="left:73.40px;top:43.46px;font-size:7.2px;line-height:7.2px;color:#000;font-weight:normal;transform:scaleX(0.9788);transform-origin:0 0;">[4] Drawing1-L...</div>
<div class="t" style="left:133.00px;top:43.46px;font-size:7.2px;line-height:7.2px;color:#000;font-weight:normal;">Main 4</div>
<div class="t" style="left:14.00px;top:51.41px;font-size:7.2px;line-height:7.2px;color:#000;font-weight:normal;transform:scaleX(0.9778);transform-origin:0 0;">3-bedroom-bun...</div>
<div class="t" style="left:73.40px;top:51.41px;font-size:7.2px;line-height:7.2px;color:#000;font-weight:normal;transform:scaleX(0.9788);transform-origin:0 0;">[5] Drawing1-L...</div>
<div class="t" style="left:133.00px;top:51.41px;font-size:7.2px;line-height:7.2px;color:#000;font-weight:normal;">Main 5</div>
<div class="t" style="left:14.00px;top:59.36px;font-size:7.2px;line-height:7.2px;color:#000;font-weight:normal;transform:scaleX(0.9778);transform-origin:0 0;">3-bedroom-bun...</div>
<div class="t" style="left:73.40px;top:59.36px;font-size:7.2px;line-height:7.2px;color:#000;font-weight:normal;transform:scaleX(0.9788);transform-origin:0 0;">[6] Drawing1-L...</div>
<div class="t" style="left:133.00px;top:59.36px;font-size:7.2px;line-height:7.2px;color:#000;font-weight:normal;">Main 6</div>
<div class="t" style="left:14.00px;top:67.31px;font-size:7.2px;line-height:7.2px;color:#000;font-weight:normal;">house-in-berlin</div>
<div class="t" style="left:73.40px;top:67.31px;font-size:7.2px;line-height:7.2px;color:#000;font-weight:normal;">1</div>
<div class="t" style="left:133.00px;top:67.31px;font-size:7.2px;line-height:7.2px;color:#000;font-weight:normal;">Additional 1</div>
<div class="t" style="left:14.00px;top:75.26px;font-size:7.2px;line-height:7.2px;color:#000;font-weight:normal;">house-in-berlin</div>
<div class="t" style="left:73.40px;top:75.26px;font-size:7.2px;line-height:7.2px;color:#000;font-weight:normal;">2</div>
<div class="t" style="left:133.00px;top:75.26px;font-size:7.2px;line-height:7.2px;color:#000;font-weight:normal;">Additional 2</div>
<div class="t" style="left:14.00px;top:83.21px;font-size:7.2px;line-height:7.2px;color:#000;font-weight:normal;">house-in-berlin</div>
<div class="t" style="left:73.40px;top:83.21px;font-size:7.2px;line-height:7.2px;color:#000;font-weight:normal;">3</div>
<div class="t" style="left:133.00px;top:83.21px;font-size:7.2px;line-height:7.2px;color:#000;font-weight:normal;">Additional 3</div>
<div class="t" style="left:14.00px;top:91.16px;font-size:7.2px;line-height:7.2px;color:#000;font-weight:normal;">house-layout-a...</div>
<div class="t" style="left:73.40px;top:91.16px;font-size:7.2px;line-height:7.2px;color:#000;font-weight:normal;">1</div>
<div class="t" style="left:133.00px;top:91.16px;font-size:7.2px;line-height:7.2px;color:#000;font-weight:normal;">Design 1</div>
<div class="t" style="left:14.00px;top:99.11px;font-size:7.2px;line-height:7.2px;color:#000;font-weight:normal;">house-layout-a...</div>
<div class="t" style="left:73.40px;top:99.11px;font-size:7.2px;line-height:7.2px;color:#000;font-weight:normal;">2</div>
<div class="t" style="left:133.00px;top:99.11px;font-size:7.2px;line-height:7.2px;color:#000;font-weight:normal;">Design 2</div>
<div class="t" style="left:14.00px;top:107.06px;font-size:7.2px;line-height:7.2px;color:#000;font-weight:normal;">house-layout-a...</div>
<div class="t" style="left:73.40px;top:107.06px;font-size:7.2px;line-height:7.2px;color:#000;font-weight:normal;">3</div>
<div class="t" style="left:133.00px;top:107.06px;font-size:7.2px;line-height:7.2px;color:#000;font-weight:normal;">Design 3</div>
<div class="t" style="left:14.00px;top:115.01px;font-size:7.2px;line-height:7.2px;color:#000;font-weight:normal;">house-layout-a...</div>
<div class="t" style="left:73.40px;top:115.01px;font-size:7.2px;line-height:7.2px;color:#000;font-weight:normal;">4</div>
<div class="t" style="left:133.00px;top:115.01px;font-size:7.2px;line-height:7.2px;color:#000;font-weight:normal;">Design 4</div>
<div class="t" style="left:14.00px;top:122.96px;font-size:7.2px;line-height:7.2px;color:#000;font-weight:normal;">house-layout-a...</div>
<div class="t" style="left:73.40px;top:122.96px;font-size:7.2px;line-height:7.2px;color:#000;font-weight:normal;">5</div>
<div class="t" style="left:133.00px;top:122.96px;font-size:7.2px;line-height:7.2px;color:#000;font-weight:normal;">Design 5</div>
<div class="t" style="left:14.00px;top:130.91px;font-size:7.2px;line-height:7.2px;color:#000;font-weight:normal;">house-layout-a...</div>
<div class="t" style="left:73.40px;top:130.91px;font-size:7.2px;line-height:7.2px;color:#000;font-weight:normal;">6</div>
<div class="t" style="left:133.00px;top:130.91px;font-size:7.2px;line-height:7.2px;color:#000;font-weight:normal;">Design 6</div>
<div class="t" style="left:14.00px;top:138.86px;font-size:7.2px;line-height:7.2px;color:#000;font-weight:normal;">house-layout-a...</div>
<div class="t" style="left:73.40px;top:138.86px;font-size:7.2px;line-height:7.2px;color:#000;font-weight:normal;">7</div>
<div class="t" style="left:133.00px;top:138.86px;font-size:7.2px;line-height:7.2px;color:#000;font-weight:normal;">Design 7</div>
<div class="t" style="left:14.00px;top:146.81px;font-size:7.2px;line-height:7.2px;color:#000;font-weight:normal;">house-layout-a...</div>
<div class="t" style="left:73.40px;top:146.81px;font-size:7.2px;line-height:7.2px;color:#000;font-weight:normal;">8</div>
<div class="t" style="left:133.00px;top:146.81px;font-size:7.2px;line-height:7.2px;color:#000;font-weight:normal;">Design 8</div>
<div class="t" style="left:14.00px;top:154.76px;font-size:7.2px;line-height:7.2px;color:#000;font-weight:normal;">house-layout-a...</div>
<div class="t" style="left:73.40px;top:154.76px;font-size:7.2px;line-height:7.2px;color:#000;font-weight:normal;">9</div>
<div class="t" style="left:133.00px;top:154.76px;font-size:7.2px;line-height:7.2px;color:#000;font-weight:normal;">Design 9</div>
<div class="t" style="left:14.00px;top:162.71px;font-size:7.2px;line-height:7.2px;color:#000;font-weight:normal;">house-layout-a...</div>
<div class="t" style="left:73.40px;top:162.71px;font-size:7.2px;line-height:7.2px;color:#000;font-weight:normal;">10</div>
<div class="t" style="left:133.00px;top:162.71px;font-size:7.2px;line-height:7.2px;color:#000;font-weight:normal;">Design 10</div>
<div class="t" style="left:14.00px;top:170.66px;font-size:7.2px;line-height:7.2px;color:#000;font-weight:normal;">house-layout-a...</div>
<div class="t" style="left:73.40px;top:170.66px;font-size:7.2px;line-height:7.2px;color:#000;font-weight:normal;">11</div>
<div class="t" style="left:133.00px;top:170.66px;font-size:7.2px;line-height:7.2px;color:#000;font-weight:normal;">Design 12</div>
<div class="t" style="left:14.00px;top:178.61px;font-size:7.2px;line-height:7.2px;color:#000;font-weight:normal;">house-layout-a...</div>
<div class="t" style="left:73.40px;top:178.61px;font-size:7.2px;line-height:7.2px;color:#000;font-weight:normal;">12</div>
<div class="t" style="left:133.00px;top:178.61px;font-size:7.2px;line-height:7.2px;color:#000;font-weight:normal;">Design 13</div>
<div class="t" style="left:14.00px;top:186.56px;font-size:7.2px;line-height:7.2px;color:#000;font-weight:normal;">house-layout-a...</div>
<div class="t" style="left:73.40px;top:186.56px;font-size:7.2px;line-height:7.2px;color:#000;font-weight:normal;">13</div>
<div class="t" style="left:133.00px;top:186.56px;font-size:7.2px;line-height:7.2px;color:#000;font-weight:normal;">Design 14</div>
<div class="t" style="left:14.00px;top:194.51px;font-size:7.2px;line-height:7.2px;color:#000;font-weight:normal;">house-layout-a...</div>
<div class="t" style="left:73.40px;top:194.51px;font-size:7.2px;line-height:7.2px;color:#000;font-weight:normal;">14</div>
<div class="t" style="left:133.00px;top:194.51px;font-size:7.2px;line-height:7.2px;color:#000;font-weight:normal;">Design 15</div>
<div class="t" style="left:14.00px;top:202.46px;font-size:7.2px;line-height:7.2px;color:#000;font-weight:normal;">house-layout-a...</div>
<div class="t" style="left:73.40px;top:202.46px;font-size:7.2px;line-height:7.2px;color:#000;font-weight:normal;">15</div>
<div class="t" style="left:133.00px;top:202.46px;font-size:7.2px;line-height:7.2px;color:#000;font-weight:normal;">Design 16</div>
<div class="t" style="left:14.00px;top:210.41px;font-size:7.2px;line-height:7.2px;color:#000;font-weight:normal;">house-layout-a...</div>
<div class="t" style="left:73.40px;top:210.41px;font-size:7.2px;line-height:7.2px;color:#000;font-weight:normal;">16</div>
<div class="t" style="left:133.00px;top:210.41px;font-size:7.2px;line-height:7.2px;color:#000;font-weight:normal;">Design 17</div>
</div>
<div class="a" style="left:164px;top:91px;width:29px;height:11px;background:#fbfbfb;border:1px solid #d8d8d8;box-shadow:1px 1px 2px rgba(0,0,0,.25)"></div>
<div class="t" style="left:166.10px;top:91.73px;font-size:8px;line-height:8px;color:#888;font-weight:normal;transform:scaleX(1.0079);transform-origin:0 0;">Main 4</div>
<div class="a" style="left:3px;top:269px;width:51px;height:14px;background:#fcfcfc;border-radius:3px;box-shadow:0 0 0 0.5px #dcdcdc"></div>
<div class="t" style="left:13.10px;top:272.24px;font-size:7.4px;line-height:7.4px;color:#000;font-weight:normal;transform:scaleX(0.9727);transform-origin:0 0;">AutoMark</div>
<div class="a" style="left:206px;top:269px;width:52px;height:14px;background:#fcfcfc;border-radius:3px;box-shadow:0 0 0 0.5px #dcdcdc"></div>
<div class="t" style="left:226.65px;top:272.24px;font-size:7.4px;line-height:7.4px;color:#000;font-weight:normal;">OK</div>
<div class="a" style="left:265px;top:269px;width:52.5px;height:14px;background:#fcfcfc;border-radius:3px;box-shadow:0 0 0 0.5px #dcdcdc"></div>
<div class="t" style="left:279.73px;top:272.24px;font-size:7.4px;line-height:7.4px;color:#000;font-weight:normal;">Cancel</div>
</div>
<svg style="left:0px;top:0px;" width="1130" height="620" viewBox="0 0 1130 620"><path d="M0 620V615A5 5 0 0 0 5 620Z M1130 620V615A5 5 0 0 1 1125 620Z" fill="#000"/></svg></body></html>
